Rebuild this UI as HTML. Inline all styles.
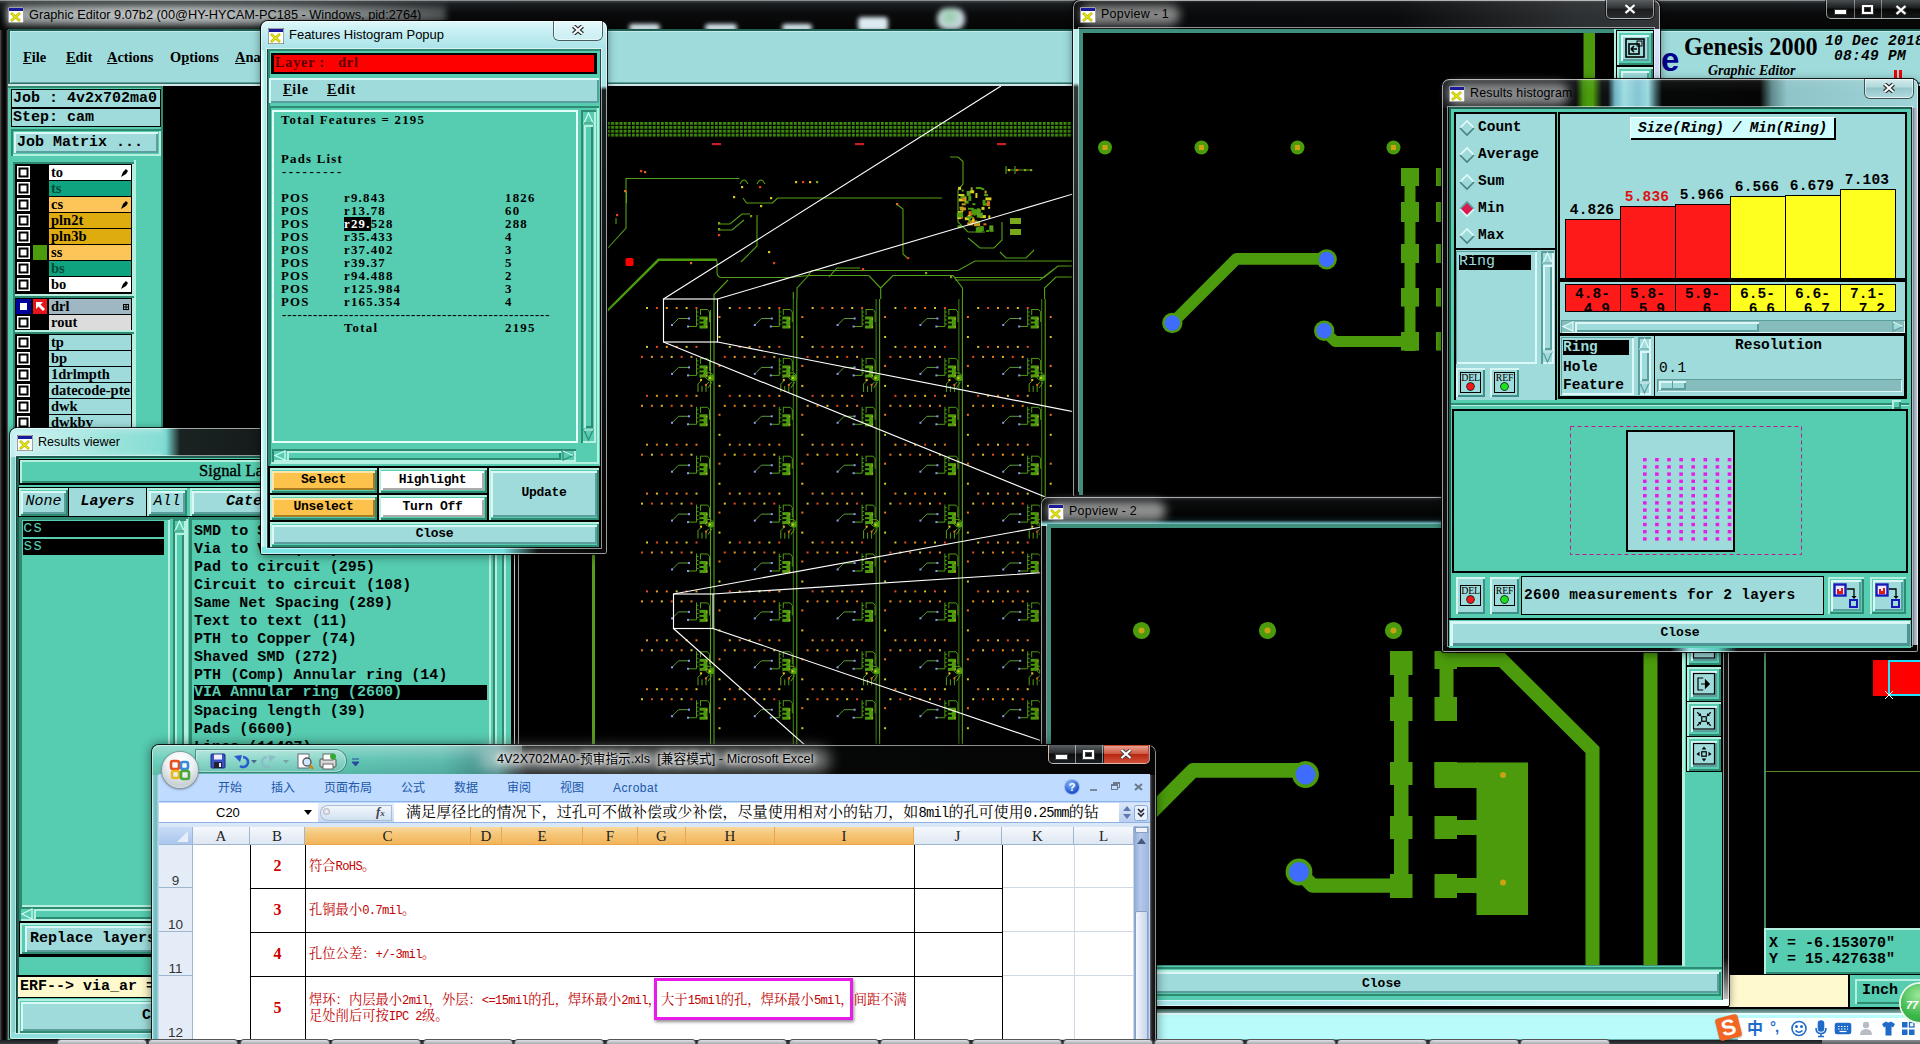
<!DOCTYPE html>
<html lang="zh"><head><meta charset="utf-8"><title>Graphic Editor</title>
<style>
*{box-sizing:border-box}
html,body{margin:0;padding:0}
body{width:1920px;height:1044px;overflow:hidden;background:#000;position:relative;font-family:"Liberation Mono",monospace;color:#000}
.a{position:absolute}
.t{background:#56ccb0}
.c{background:#9fdbdb}
.cb{font:bold 15px "Liberation Mono",monospace;white-space:pre}
.ts{font:bold 14.4px "Liberation Serif",serif;white-space:pre}
.ui{font:12px "Liberation Sans","Noto Sans CJK SC",sans-serif;white-space:pre}
.upt{box-shadow:inset 2px 2px 0 #b4efe0,inset -2px -2px 0 #2f8a72}
.dnt{box-shadow:inset 2px 2px 0 #2f8a72,inset -2px -2px 0 #b4efe0}
.upc{box-shadow:inset 2px 2px 0 #dcf7f7,inset -2px -2px 0 #5c9d9d}
.dnc{box-shadow:inset 2px 2px 0 #5c9d9d,inset -2px -2px 0 #dcf7f7}
.up1t{box-shadow:inset 1px 1px 0 #b4efe0,inset -1px -1px 0 #2f8a72}
.up1c{box-shadow:inset 1px 1px 0 #dcf7f7,inset -1px -1px 0 #5c9d9d}
.glow{text-shadow:0 0 6px #fff,0 0 6px #fff,0 0 9px #fff,0 0 12px #fff}
.win{position:absolute;border-radius:7px 7px 3px 3px}
.cap{position:absolute;top:0;height:19px;border:1px solid rgba(255,255,255,.55);border-top:none;border-radius:0 0 5px 5px;box-shadow:0 0 0 1px rgba(0,0,0,.6)}
.u{text-decoration:underline}
svg{position:absolute;overflow:visible}
</style></head><body>
<svg width="0" height="0" style="position:absolute"><defs>
<symbol id="xi" viewBox="0 0 16 16"><rect x="0" y="0" width="16" height="16" fill="#fff"/><rect x="0" y="0" width="16" height="16" fill="none" stroke="#444" stroke-width="1"/><rect x="1" y="1" width="14" height="3" fill="#1a1a9a"/><path d="M3 6 L12 14 M12 6 L3 14" stroke="#b8b800" stroke-width="2.6"/><path d="M3.5 6.5 L11.5 13.5 M11.5 6.5 L3.5 13.5" stroke="#e6e619" stroke-width="1.2"/></symbol>
<symbol id="cx" viewBox="0 0 12 10"><path d="M1.5 1 L10.5 9 M10.5 1 L1.5 9" stroke="#3a3a3a" stroke-width="3.8"/><path d="M1.5 1 L10.5 9 M10.5 1 L1.5 9" stroke="#fff" stroke-width="2.2"/></symbol>
<symbol id="cx2" viewBox="0 0 12 10"><path d="M1.5 1 L10.5 9 M10.5 1 L1.5 9" stroke="#2a2f33" stroke-width="4.4"/><path d="M1.5 1 L10.5 9 M10.5 1 L1.5 9" stroke="#fff" stroke-width="2"/></symbol>
</defs></svg>
<div class="a " style="left:0px;top:0px;width:1920px;height:30px;background:linear-gradient(#3a3f42 0,#1b1e20 3px,#0a0b0c 12px,#050505 29px);border-top:1px solid #8a9092"></div>
<div class="a" style="left:6px;top:3px;width:440px;height:24px;background:radial-gradient(ellipse at 35% 50%,rgba(255,255,255,.85) 0,rgba(235,245,245,.6) 45%,rgba(200,215,215,0) 100%);filter:blur(3px)"></div>
<div class="a" style="left:629px;top:24px;width:31px;height:7px;background:rgba(232,248,255,.95);filter:blur(2.2px);border-radius:4px"></div>
<div class="a" style="left:705px;top:24px;width:32px;height:7px;background:rgba(232,248,255,.95);filter:blur(2.2px);border-radius:4px"></div>
<div class="a" style="left:782px;top:24px;width:30px;height:7px;background:rgba(232,248,255,.95);filter:blur(2.2px);border-radius:4px"></div>
<div class="a" style="left:858px;top:17px;width:30px;height:14px;background:rgba(232,248,255,.95);filter:blur(2.2px);border-radius:4px"></div>
<div class="a" style="left:937px;top:8px;width:28px;height:22px;background:radial-gradient(circle at 45% 40%,rgba(150,215,170,.95),rgba(225,240,250,.9) 60%);filter:blur(2.5px);border-radius:10px"></div>
<svg class="a" style="left:8px;top:7px" width="16" height="16"><use href="#xi"/></svg>
<div class="a ui" style="left:29px;top:7px;font-size:12.75px;line-height:15px;color:#000" id="maintitle">Graphic Editor 9.07b2 (00@HY-HYCAM-PC185 - Windows, pid:2764)</div>
<div class="cap" style="left:1826px;width:98px;background:linear-gradient(#4a4f52,#1a1c1d 45%,#060606 50%,#15181a)"></div>
<div class="a" style="left:1854px;top:0;width:1px;height:18px;background:rgba(255,255,255,.4)"></div><div class="a" style="left:1881px;top:0;width:1px;height:18px;background:rgba(255,255,255,.4)"></div>
<div class="a" style="left:1835px;top:10px;width:11px;height:4px;background:#fff;box-shadow:0 0 0 1px #333"></div>
<div class="a" style="left:1862px;top:5px;width:11px;height:9px;border:2.5px solid #fff;box-shadow:0 0 0 1px #333,inset 0 0 0 1px #333"></div>
<svg class="a" style="left:1895px;top:5px" width="12" height="10"><use href="#cx"/></svg>
<div class="a " style="left:0px;top:30px;width:8px;height:1014px;background:linear-gradient(90deg,#555 0,#111 2px,#000 5px,#2a2a2a 7px,#777 8px)"></div>
<div class="a t" style="left:8px;top:29px;width:1912px;height:57px;"></div>
<div class="a " style="left:8px;top:29px;width:1912px;height:2px;background:#1e5e50"></div>
<div class="a " style="left:8px;top:29px;width:2px;height:1012px;background:#1e5e50"></div>
<div class="a c" style="left:10px;top:31px;width:1910px;height:52px;box-shadow:inset 1px 1px 0 #c4ecec,inset 0 -1px 0 #5c9d9d"></div>
<div class="a " style="left:8px;top:83px;width:1912px;height:1px;background:#2f6f62"></div>
<div class="a " style="left:8px;top:84px;width:1912px;height:2px;background:#cfe6e6"></div>
<div class="a ts" style="left:23px;top:47px;line-height:20px"><span class="u">F</span>ile</div>
<div class="a ts" style="left:66px;top:47px;line-height:20px"><span class="u">E</span>dit</div>
<div class="a ts" style="left:107px;top:47px;line-height:20px"><span class="u">A</span>ctions</div>
<div class="a ts" style="left:170px;top:47px;line-height:20px">O<span class="u">p</span>tions</div>
<div class="a ts" style="left:235px;top:47px;line-height:20px"><span class="u">A</span>na</div>
<div class="a t" style="left:8px;top:86px;width:155px;height:956px;"></div>
<div class="a " style="left:8px;top:86px;width:155px;height:2px;background:#2f8a72"></div>
<div class="a " style="left:161px;top:88px;width:2px;height:400px;background:#2f8a72"></div>
<div class="a " style="left:11px;top:89px;width:150px;height:19px;background:#000"></div>
<div class="a c cb" style="left:12px;top:90px;width:148px;height:17px;line-height:17px;padding-left:1px;font-size:15px">Job : 4v2x702ma0</div>
<div class="a " style="left:11px;top:108px;width:150px;height:19px;background:#000"></div>
<div class="a c cb" style="left:12px;top:109px;width:148px;height:17px;line-height:17px;padding-left:1px;font-size:15px">Step: cam</div>
<div class="a t dnt" style="left:11px;top:129px;width:150px;height:27px;"></div>
<div class="a c upc cb" style="left:14px;top:132px;width:144px;height:21px;line-height:21px;padding-left:3px;font-size:15px">Job Matrix ...</div>
<div class="a t dnt" style="left:13px;top:162px;width:121px;height:134px;"></div>
<div class="a " style="left:15px;top:164px;width:117px;height:130px;background:#000"></div>
<div class="a t dnt" style="left:13px;top:296px;width:121px;height:36px;"></div>
<div class="a " style="left:15px;top:298px;width:117px;height:32px;background:#000"></div>
<div class="a t dnt" style="left:13px;top:332px;width:121px;height:100px;"></div>
<div class="a " style="left:15px;top:334px;width:117px;height:98px;background:#000"></div>
<div class="a " style="left:134px;top:160px;width:2px;height:280px;background:#b4efe0"></div>
<div class="a " style="left:16px;top:165px;width:15px;height:15px;background:#000"></div>
<div class="a " style="left:17px;top:166px;width:13px;height:13px;background:#fff;box-shadow:inset 0 0 0 1.5px #fff,inset 0 0 0 3.5px #000"></div>
<div class="a " style="left:49px;top:165px;width:82px;height:15px;background:#fff;overflow:hidden;font:bold 14.5px 'Liberation Serif',serif;line-height:14px;padding-left:2px;color:#000;white-space:pre">to</div>
<svg class="a" style="left:120px;top:168px" width="9" height="10"><path d="M1 9 L3 4 L6 1 L8 3 L6 6 Z" fill="#000"/></svg>
<div class="a " style="left:16px;top:181px;width:15px;height:15px;background:#000"></div>
<div class="a " style="left:17px;top:182px;width:13px;height:13px;background:#fff;box-shadow:inset 0 0 0 1.5px #fff,inset 0 0 0 3.5px #000"></div>
<div class="a " style="left:49px;top:181px;width:82px;height:15px;background:#0fa37f;overflow:hidden;font:bold 14.5px 'Liberation Serif',serif;line-height:14px;padding-left:2px;color:#004d3a;white-space:pre">ts</div>
<div class="a " style="left:16px;top:197px;width:15px;height:15px;background:#000"></div>
<div class="a " style="left:17px;top:198px;width:13px;height:13px;background:#fff;box-shadow:inset 0 0 0 1.5px #fff,inset 0 0 0 3.5px #000"></div>
<div class="a " style="left:49px;top:197px;width:82px;height:15px;background:#fdc558;overflow:hidden;font:bold 14.5px 'Liberation Serif',serif;line-height:14px;padding-left:2px;color:#000;white-space:pre">cs</div>
<svg class="a" style="left:120px;top:200px" width="9" height="10"><path d="M1 9 L3 4 L6 1 L8 3 L6 6 Z" fill="#000"/></svg>
<div class="a " style="left:16px;top:213px;width:15px;height:15px;background:#000"></div>
<div class="a " style="left:17px;top:214px;width:13px;height:13px;background:#fff;box-shadow:inset 0 0 0 1.5px #fff,inset 0 0 0 3.5px #000"></div>
<div class="a " style="left:49px;top:213px;width:82px;height:15px;background:#dfac10;overflow:hidden;font:bold 14.5px 'Liberation Serif',serif;line-height:14px;padding-left:2px;color:#000;white-space:pre">pln2t</div>
<div class="a " style="left:16px;top:229px;width:15px;height:15px;background:#000"></div>
<div class="a " style="left:17px;top:230px;width:13px;height:13px;background:#fff;box-shadow:inset 0 0 0 1.5px #fff,inset 0 0 0 3.5px #000"></div>
<div class="a " style="left:49px;top:229px;width:82px;height:15px;background:#dfac10;overflow:hidden;font:bold 14.5px 'Liberation Serif',serif;line-height:14px;padding-left:2px;color:#000;white-space:pre">pln3b</div>
<div class="a " style="left:16px;top:245px;width:15px;height:15px;background:#000"></div>
<div class="a " style="left:17px;top:246px;width:13px;height:13px;background:#fff;box-shadow:inset 0 0 0 1.5px #fff,inset 0 0 0 3.5px #000"></div>
<div class="a " style="left:49px;top:245px;width:82px;height:15px;background:#fdc558;overflow:hidden;font:bold 14.5px 'Liberation Serif',serif;line-height:14px;padding-left:2px;color:#000;white-space:pre">ss</div>
<div class="a " style="left:16px;top:261px;width:15px;height:15px;background:#000"></div>
<div class="a " style="left:17px;top:262px;width:13px;height:13px;background:#fff;box-shadow:inset 0 0 0 1.5px #fff,inset 0 0 0 3.5px #000"></div>
<div class="a " style="left:49px;top:261px;width:82px;height:15px;background:#0fa37f;overflow:hidden;font:bold 14.5px 'Liberation Serif',serif;line-height:14px;padding-left:2px;color:#004d3a;white-space:pre">bs</div>
<div class="a " style="left:16px;top:277px;width:15px;height:15px;background:#000"></div>
<div class="a " style="left:17px;top:278px;width:13px;height:13px;background:#fff;box-shadow:inset 0 0 0 1.5px #fff,inset 0 0 0 3.5px #000"></div>
<div class="a " style="left:49px;top:277px;width:82px;height:15px;background:#fff;overflow:hidden;font:bold 14.5px 'Liberation Serif',serif;line-height:14px;padding-left:2px;color:#000;white-space:pre">bo</div>
<svg class="a" style="left:120px;top:280px" width="9" height="10"><path d="M1 9 L3 4 L6 1 L8 3 L6 6 Z" fill="#000"/></svg>
<div class="a " style="left:16px;top:299px;width:15px;height:15px;background:#00009c"></div>
<div class="a " style="left:17px;top:300px;width:13px;height:13px;background:#fff;border:3px solid #00009c"></div>
<div class="a " style="left:49px;top:299px;width:82px;height:15px;background:#9fb7c3;overflow:hidden;font:bold 14.5px 'Liberation Serif',serif;line-height:14px;padding-left:2px;color:#000;white-space:pre">drl</div>
<svg class="a" style="left:123px;top:304px" width="6" height="6"><rect x=".5" y=".5" width="5" height="5" fill="none" stroke="#000"/><path d="M0 3H6M3 0V6" stroke="#000"/></svg>
<div class="a " style="left:16px;top:315px;width:15px;height:15px;background:#000"></div>
<div class="a " style="left:17px;top:316px;width:13px;height:13px;background:#fff;box-shadow:inset 0 0 0 1.5px #fff,inset 0 0 0 3.5px #000"></div>
<div class="a " style="left:49px;top:315px;width:82px;height:15px;background:#dcdcdc;overflow:hidden;font:bold 14.5px 'Liberation Serif',serif;line-height:14px;padding-left:2px;color:#000;white-space:pre">rout</div>
<div class="a " style="left:16px;top:335px;width:15px;height:15px;background:#000"></div>
<div class="a " style="left:17px;top:336px;width:13px;height:13px;background:#fff;box-shadow:inset 0 0 0 1.5px #fff,inset 0 0 0 3.5px #000"></div>
<div class="a " style="left:49px;top:335px;width:82px;height:15px;background:#9fdbdb;overflow:hidden;font:bold 14.5px 'Liberation Serif',serif;line-height:14px;padding-left:2px;color:#000;white-space:pre">tp</div>
<div class="a " style="left:16px;top:351px;width:15px;height:15px;background:#000"></div>
<div class="a " style="left:17px;top:352px;width:13px;height:13px;background:#fff;box-shadow:inset 0 0 0 1.5px #fff,inset 0 0 0 3.5px #000"></div>
<div class="a " style="left:49px;top:351px;width:82px;height:15px;background:#9fdbdb;overflow:hidden;font:bold 14.5px 'Liberation Serif',serif;line-height:14px;padding-left:2px;color:#000;white-space:pre">bp</div>
<div class="a " style="left:16px;top:367px;width:15px;height:15px;background:#000"></div>
<div class="a " style="left:17px;top:368px;width:13px;height:13px;background:#fff;box-shadow:inset 0 0 0 1.5px #fff,inset 0 0 0 3.5px #000"></div>
<div class="a " style="left:49px;top:367px;width:82px;height:15px;background:#9fdbdb;overflow:hidden;font:bold 14.5px 'Liberation Serif',serif;line-height:14px;padding-left:2px;color:#000;white-space:pre">1drlmpth</div>
<div class="a " style="left:16px;top:383px;width:15px;height:15px;background:#000"></div>
<div class="a " style="left:17px;top:384px;width:13px;height:13px;background:#fff;box-shadow:inset 0 0 0 1.5px #fff,inset 0 0 0 3.5px #000"></div>
<div class="a " style="left:49px;top:383px;width:82px;height:15px;background:#9fdbdb;overflow:hidden;font:bold 14.5px 'Liberation Serif',serif;line-height:14px;padding-left:2px;color:#000;white-space:pre">datecode-pte</div>
<div class="a " style="left:16px;top:399px;width:15px;height:15px;background:#000"></div>
<div class="a " style="left:17px;top:400px;width:13px;height:13px;background:#fff;box-shadow:inset 0 0 0 1.5px #fff,inset 0 0 0 3.5px #000"></div>
<div class="a " style="left:49px;top:399px;width:82px;height:15px;background:#9fdbdb;overflow:hidden;font:bold 14.5px 'Liberation Serif',serif;line-height:14px;padding-left:2px;color:#000;white-space:pre">dwk</div>
<div class="a " style="left:16px;top:415px;width:15px;height:15px;background:#000"></div>
<div class="a " style="left:17px;top:416px;width:13px;height:13px;background:#fff;box-shadow:inset 0 0 0 1.5px #fff,inset 0 0 0 3.5px #000"></div>
<div class="a " style="left:49px;top:415px;width:82px;height:15px;background:#9fdbdb;overflow:hidden;font:bold 14.5px 'Liberation Serif',serif;line-height:14px;padding-left:2px;color:#000;white-space:pre">dwkbv</div>
<div class="a " style="left:33px;top:245px;width:14px;height:15px;background:#4b9b0c"></div>
<div class="a " style="left:33px;top:299px;width:14px;height:15px;background:#e8141c"></div>
<svg class="a" style="left:33px;top:299px" width="14" height="15"><path d="M3 3 H10 L7.5 5.5 L12 10 L10 12 L5.5 7.5 L3 10 Z" fill="#fff"/></svg>
<div class="a" style="left:1661px;top:46px;font:bold 33px 'Liberation Sans',sans-serif;color:#00008b;line-height:28px">e</div>
<div class="a" style="left:1684px;top:33px;font:bold 24.2px 'Liberation Serif',serif;line-height:28px;white-space:pre">Genesis 2000</div>
<div class="a" style="left:1708px;top:63px;font:italic bold 14px 'Liberation Serif',serif;line-height:16px;white-space:pre">Graphic Editor</div>
<div class="a" style="left:1825px;top:34px;font:italic bold 14.5px 'Liberation Mono',monospace;line-height:15px;white-space:pre;letter-spacing:.3px">10 Dec 2018<br> 08:49 PM</div>
<div class="a " style="left:1894px;top:70px;width:3px;height:10px;background:#e00"></div>
<div class="a " style="left:1899px;top:70px;width:3px;height:10px;background:#e00"></div>
<div class="a " style="left:1764px;top:652px;width:2px;height:280px;background:#4a8a5a"></div>
<div class="a " style="left:1766px;top:771px;width:154px;height:1px;background:#5a8a2a"></div>
<div class="a " style="left:1873px;top:660px;width:16px;height:36px;background:#fe0000"></div>
<div class="a " style="left:1888px;top:660px;width:34px;height:36px;background:#fe0000;border:2px solid #1fe5ff"></div>
<svg class="a" style="left:1885px;top:691px" width="8" height="8"><path d="M0 0L8 8M8 0L0 8" stroke="#fff" stroke-width="1"/></svg>
<div class="a t upt cb" style="left:1764px;top:928px;width:160px;height:46px;line-height:15.5px;padding:8px 0 0 5px;font-size:15px">X = -6.153070"<br>Y = 15.427638"</div>
<div class="a " style="left:1729px;top:975px;width:119px;height:32px;background:#fffacd"></div>
<div class="a t" style="left:1848px;top:975px;width:72px;height:33px;border-left:2px solid #000"></div>
<div class="a t upt cb" style="left:1855px;top:979px;width:70px;height:25px;line-height:24px;padding-left:7px">Inch</div>
<div class="a " style="left:1156px;top:1007px;width:764px;height:2px;background:#000"></div>
<div class="a " style="left:1156px;top:1009px;width:764px;height:4px;background:linear-gradient(#3a6a60,#8fb0b0)"></div>
<div class="a " style="left:1156px;top:1013px;width:764px;height:27px;background:#b9fbfb;border-top:2px solid #e6ffff;border-bottom:1px solid #6aa"></div>
<svg class="a" style="left:163px;top:86px" width="910" height="660" viewBox="163 86 910 660"><defs><clipPath id="pc"><rect x="163" y="86" width="910" height="660"/></clipPath><pattern id="bd" x="607" y="122" width="4.15" height="3.9" patternUnits="userSpaceOnUse"><rect x="0" y="0" width="3" height="2.8" fill="#408a0e"/></pattern><g id="cmp" fill="none" stroke="#4e9a12" stroke-width="1"><path d="M-42 7 L-35.500 .5 H-25.500" stroke="#5a9a3a"/><path d="M-26 8.500 H-17.500 V-9"/><path d="M-17.500 -6h2M-17.500 -2h2M-17.500 2h2M-17.500 6h2"/><path d="M-14 -8.500 H-6.500 L-4.500 -6 V4"/><path d="M-13.500 -8.500 V-3"/><rect x="-14.500" y="-1.500" width="8" height="12" fill="#4b9b0c" stroke="none"/><rect x="-14.500" y="1.500" width="4" height="2" fill="#000" stroke="none"/><rect x="-14.500" y="5.500" width="4" height="2" fill="#000" stroke="none"/><rect x="-43" y="6" width="2" height="2" fill="#8a9ae8" stroke="none"/><rect x="-26" y="-.5" width="2" height="2" fill="#8a9ae8" stroke="none"/><rect x="-27" y="7.500" width="2" height="2" fill="#8a9ae8" stroke="none"/><rect x="-8" y="0" width="1.500" height="1.500" fill="#d8a020" stroke="none"/><rect x="-8" y="8" width="1.500" height="1.500" fill="#d8a020" stroke="none"/></g><g id="tng" fill="none" stroke="#5aa01a" stroke-width="1"><path d="M-14 -6 l5 -5 h6 l3 3 M-16 8 v-8 l4 -4 M-12 8 v-6 M-8 8 v-7 l3 -3 M-10 -8 l4 4 l5 -1 M-2 -2 l-4 6"/><circle cx="-3" cy="-6" r="3.200" fill="#4b9b0c" stroke="none"/><rect x="-14" y="-5" width="2" height="2" fill="#e8c020" stroke="none"/><rect x="-9" y="0" width="2" height="2" fill="#e86a1c" stroke="none"/><rect x="-5" y="-7" width="2" height="2" fill="#d8d020" stroke="none"/></g></defs><g clip-path="url(#pc)"><rect x="607" y="122" width="470" height="15.2" fill="url(#bd)"/><rect x="712" y="143" width="9" height="2.2" fill="#c8202a"/><rect x="855" y="143" width="9" height="2.2" fill="#c8202a"/><rect x="997" y="143" width="9" height="2.2" fill="#c8202a"/><rect x="625.500" y="258" width="8" height="8" rx="1.500" fill="#fe0000"/><path d="M739.500 178.500 H626 V228 L607 249" fill="none" stroke="#55a018" stroke-width="1.1"/><path d="M743 198 L746.500 203 H772.500 L777.500 198 H942" fill="none" stroke="#55a018" stroke-width="1.1"/><path d="M896.500 204 L903 209 V254 L908 258.500" fill="none" stroke="#55a018" stroke-width="1.1"/><path d="M950 157 H958 L963 161.500 V184 L958 190 V222 L968 232 H985" fill="none" stroke="#55a018" stroke-width="1.1"/><path d="M740 184 q4 -8 8 0 M757 184 q4 -8 8 0" fill="none" stroke="#55a018" stroke-width="1.1"/><path d="M718 224 H730 L742 214 H750 M718 230 H732 L744 220 M757 215 V246 L741 262" fill="none" stroke="#55a018" stroke-width="1.1"/><path d="M626.500 191 v12 M616 218 v6" fill="none" stroke="#55a018" stroke-width="1.1"/><path d="M722 277.500 H790 L808.500 275.500 H868.700 M808 275.500 L812 270.500 H958 L975 261 H1073 M829 277 L837 268 H860" fill="none" stroke="#55a018" stroke-width="1.1"/><path d="M955 277.500 H1044 L1058 266 H1073 M955 280 H1040 L1054 269" fill="none" stroke="#55a018" stroke-width="1.1"/><path d="M717 260.500 V272 Q717 277.500 722 277.500" fill="none" stroke="#55a018" stroke-width="1.1"/><path d="M714 299 V294.500 L728 280 M797 299 V288 L808.500 275.500 M880.700 299 V288 L868.700 275.500 M880.700 288 L893 275.500 H953 L962.500 288 V299 M1044.600 299 V288 L1056 277 H1073" fill="none" stroke="#55a018" stroke-width="1.1"/><path d="M793.300 299 V292 M710.500 310 V745" fill="none" stroke="#55a018" stroke-width="1.1"/><path d="M1006 166 v8 M1015 166 v8 M1006 170 h24" fill="none" stroke="#55a018" stroke-width="1.1"/><path d="M968 238 l12 10 h14 l8 -8 v-18 M1000 252 l6 6 h20 l8 -8" fill="none" stroke="#55a018" stroke-width="1.1"/><path d="M603 315 L658.500 259.800 H717" fill="none" stroke="#4b9b0c" stroke-width="2.4"/><rect x="967.0" y="191.2" width="2" height="2" fill="#e86a1c"/><rect x="959.2" y="212.0" width="3" height="2" fill="#4b9b0c"/><rect x="970.7" y="187.4" width="2" height="5" fill="#c8a020"/><rect x="958.0" y="211.1" width="3" height="5" fill="#d8d020"/><rect x="975.8" y="187.0" width="6" height="2" fill="#4b9b0c"/><rect x="957.6" y="225.2" width="4" height="3" fill="#4b9b0c"/><rect x="974.4" y="211.4" width="3" height="2" fill="#e86a1c"/><rect x="975.4" y="193.0" width="2" height="5" fill="#d8d020"/><rect x="958.1" y="186.9" width="3" height="3" fill="#d8d020"/><rect x="974.1" y="221.3" width="6" height="5" fill="#c8a020"/><rect x="968.3" y="195.9" width="3" height="5" fill="#4b9b0c"/><rect x="958.8" y="198.4" width="6" height="3" fill="#d8d020"/><rect x="971.3" y="213.2" width="2" height="2" fill="#e86a1c"/><rect x="970.2" y="220.3" width="3" height="3" fill="#c8a020"/><rect x="957.3" y="216.1" width="4" height="3" fill="#d8d020"/><rect x="967.9" y="207.8" width="6" height="2" fill="#4b9b0c"/><rect x="988.1" y="206.8" width="2" height="2" fill="#d8d020"/><rect x="979.9" y="215.1" width="6" height="3" fill="#d8d020"/><rect x="969.1" y="216.1" width="2" height="3" fill="#5aa01a"/><rect x="961.7" y="189.6" width="2" height="2" fill="#5aa01a"/><rect x="960.4" y="195.9" width="6" height="3" fill="#4b9b0c"/><rect x="961.7" y="203.3" width="4" height="2" fill="#c8a020"/><rect x="985.4" y="197.4" width="6" height="3" fill="#d8d020"/><rect x="986.1" y="230.0" width="3" height="2" fill="#4b9b0c"/><rect x="961.1" y="215.6" width="2" height="3" fill="#e86a1c"/><rect x="962.2" y="197.5" width="3" height="3" fill="#e86a1c"/><rect x="968.6" y="211.2" width="3" height="5" fill="#e86a1c"/><rect x="988.3" y="215.4" width="2" height="3" fill="#d8d020"/><rect x="983.1" y="202.8" width="6" height="3" fill="#4b9b0c"/><rect x="972.4" y="203.2" width="3" height="2" fill="#4b9b0c"/><rect x="971.0" y="189.3" width="2" height="2" fill="#4b9b0c"/><rect x="975.3" y="209.8" width="4" height="5" fill="#4b9b0c"/><rect x="958.4" y="194.0" width="6" height="2" fill="#d8d020"/><rect x="964.6" y="200.7" width="4" height="3" fill="#4b9b0c"/><rect x="959.9" y="207.4" width="6" height="3" fill="#c8a020"/><rect x="966.6" y="190.9" width="4" height="5" fill="#5aa01a"/><rect x="972.3" y="217.2" width="2" height="2" fill="#e86a1c"/><rect x="968.3" y="217.1" width="2" height="5" fill="#5aa01a"/><rect x="989.3" y="225.4" width="4" height="5" fill="#5aa01a"/><rect x="986.9" y="201.1" width="3" height="5" fill="#e86a1c"/><rect x="982.5" y="199.8" width="3" height="5" fill="#4b9b0c"/><rect x="983.4" y="223.3" width="3" height="2" fill="#e86a1c"/><rect x="972.8" y="219.1" width="2" height="3" fill="#c8a020"/><rect x="964.8" y="217.2" width="4" height="3" fill="#d8d020"/><rect x="989.6" y="229.8" width="4" height="2" fill="#4b9b0c"/><rect x="959.5" y="206.6" width="4" height="2" fill="#c8a020"/><rect x="977.2" y="227.2" width="2" height="3" fill="#d8d020"/><rect x="967.7" y="214.9" width="2" height="3" fill="#d8d020"/><rect x="981.5" y="206.9" width="3" height="3" fill="#d8d020"/><rect x="967.3" y="222.4" width="6" height="3" fill="#c8a020"/><rect x="981.3" y="188.1" width="3" height="2" fill="#4b9b0c"/><rect x="956.9" y="212.4" width="6" height="5" fill="#4b9b0c"/><rect x="976.8" y="212.6" width="6" height="5" fill="#5aa01a"/><rect x="961.3" y="210.3" width="2" height="2" fill="#d8d020"/><rect x="978.1" y="209.3" width="3" height="3" fill="#4b9b0c"/><rect x="984.1" y="194.1" width="4" height="2" fill="#5aa01a"/><rect x="973.0" y="220.7" width="4" height="3" fill="#e86a1c"/><rect x="970.2" y="190.3" width="4" height="3" fill="#d8d020"/><rect x="975.8" y="227.4" width="6" height="5" fill="#4b9b0c"/><rect x="974.1" y="209.1" width="2" height="3" fill="#4b9b0c"/><rect x="976.7" y="221.2" width="3" height="2" fill="#4b9b0c"/><rect x="972.1" y="218.8" width="2" height="3" fill="#d8d020"/><rect x="973.6" y="210.7" width="2" height="5" fill="#4b9b0c"/><rect x="964.4" y="197.3" width="2" height="5" fill="#c8a020"/><rect x="975.1" y="220.5" width="2" height="3" fill="#5aa01a"/><rect x="976.8" y="208.3" width="3" height="5" fill="#5aa01a"/><rect x="971.4" y="209.6" width="6" height="5" fill="#4b9b0c"/><rect x="979.8" y="226.1" width="4" height="5" fill="#4b9b0c"/><rect x="984.6" y="190.6" width="2" height="3" fill="#c8a020"/><rect x="966.7" y="216.2" width="6" height="2" fill="#4b9b0c"/><rect x="1010" y="218" width="11" height="6" fill="#7aa81a"/><rect x="1010" y="229" width="11" height="6" fill="#7aa81a"/><rect x="640" y="170" width="2.2" height="2.2" fill="#e8441c"/><rect x="644" y="171" width="2.2" height="2.2" fill="#e86a1c"/><rect x="741" y="186" width="2.2" height="2.2" fill="#d8c828"/><rect x="759" y="186" width="2.2" height="2.2" fill="#e8441c"/><rect x="795" y="181" width="2.2" height="2.2" fill="#d8c828"/><rect x="802" y="181" width="2.2" height="2.2" fill="#e8441c"/><rect x="809" y="181" width="2.2" height="2.2" fill="#d8c828"/><rect x="816" y="181" width="2.2" height="2.2" fill="#7aa81a"/><rect x="1008" y="169" width="2.2" height="2.2" fill="#d8c828"/><rect x="1016" y="169" width="2.2" height="2.2" fill="#e86a1c"/><rect x="1024" y="169" width="2.2" height="2.2" fill="#7aa81a"/><rect x="1030" y="169" width="2.2" height="2.2" fill="#7aa81a"/><rect x="733" y="196" width="2.2" height="2.2" fill="#d8c828"/><rect x="770" y="197" width="2.2" height="2.2" fill="#d8c828"/><rect x="760" y="205" width="2.2" height="2.2" fill="#d8c828"/><rect x="718" y="222" width="2.2" height="2.2" fill="#7aa81a"/><rect x="718" y="228" width="2.2" height="2.2" fill="#7aa81a"/><rect x="718" y="234" width="2.2" height="2.2" fill="#e8441c"/><rect x="750" y="215" width="2.2" height="2.2" fill="#7aa81a"/><rect x="768" y="251" width="2.2" height="2.2" fill="#d8c828"/><rect x="773" y="262" width="2.2" height="2.2" fill="#e8441c"/><rect x="616" y="214" width="2.2" height="2.2" fill="#e8441c"/><rect x="624" y="190" width="2.2" height="2.2" fill="#e86a1c"/><rect x="907" y="257" width="2.2" height="2.2" fill="#e8441c"/><rect x="896" y="203" width="2.2" height="2.2" fill="#e86a1c"/><rect x="862" y="268" width="2.2" height="2.2" fill="#e8441c"/><rect x="925" y="272" width="2.2" height="2.2" fill="#7aa81a"/><rect x="950" y="276" width="2.2" height="2.2" fill="#7aa81a"/><rect x="690" y="262" width="2.2" height="2.2" fill="#e86a1c"/><path d="M714.0 299 V745" stroke="#55a018" stroke-width="1.1"/><use href="#cmp" x="714.0" y="318.0"/><rect x="646.0" y="307.0" width="2" height="2" fill="#d8c828"/><rect x="655.9" y="307.0" width="2" height="2" fill="#e84a1c"/><rect x="665.8" y="307.0" width="2" height="2" fill="#e8a01c"/><rect x="675.7" y="307.0" width="2" height="2" fill="#e8761c"/><rect x="685.6" y="307.0" width="2" height="2" fill="#d8c828"/><rect x="695.5" y="307.0" width="2" height="2" fill="#e84a1c"/><rect x="718.5" y="316.0" width="2" height="2" fill="#e8761c"/><rect x="718.5" y="336.0" width="2" height="2" fill="#d8c828"/><use href="#cmp" x="714.0" y="366.9"/><rect x="646.0" y="345.9" width="2" height="2" fill="#d8c828"/><rect x="641.0" y="355.9" width="2" height="2" fill="#e84a1c"/><rect x="655.9" y="345.9" width="2" height="2" fill="#e84a1c"/><rect x="650.9" y="355.9" width="2" height="2" fill="#e8a01c"/><rect x="665.8" y="345.9" width="2" height="2" fill="#e8a01c"/><rect x="660.8" y="355.9" width="2" height="2" fill="#e8761c"/><rect x="675.7" y="345.9" width="2" height="2" fill="#e8761c"/><rect x="670.7" y="355.9" width="2" height="2" fill="#d8c828"/><rect x="685.6" y="345.9" width="2" height="2" fill="#d8c828"/><rect x="680.6" y="355.9" width="2" height="2" fill="#e84a1c"/><rect x="695.5" y="345.9" width="2" height="2" fill="#e84a1c"/><rect x="690.5" y="355.9" width="2" height="2" fill="#e8a01c"/><rect x="718.5" y="364.9" width="2" height="2" fill="#e8761c"/><rect x="718.5" y="384.9" width="2" height="2" fill="#d8c828"/><use href="#tng" x="714.0" y="383.9"/><use href="#cmp" x="714.0" y="415.8"/><rect x="646.0" y="394.8" width="2" height="2" fill="#e84a1c"/><rect x="641.0" y="404.8" width="2" height="2" fill="#e8a01c"/><rect x="655.9" y="394.8" width="2" height="2" fill="#e8a01c"/><rect x="650.9" y="404.8" width="2" height="2" fill="#e8761c"/><rect x="665.8" y="394.8" width="2" height="2" fill="#e8761c"/><rect x="660.8" y="404.8" width="2" height="2" fill="#d8c828"/><rect x="675.7" y="394.8" width="2" height="2" fill="#d8c828"/><rect x="670.7" y="404.8" width="2" height="2" fill="#e84a1c"/><rect x="685.6" y="394.8" width="2" height="2" fill="#e84a1c"/><rect x="680.6" y="404.8" width="2" height="2" fill="#e8a01c"/><rect x="695.5" y="394.8" width="2" height="2" fill="#e8a01c"/><rect x="690.5" y="404.8" width="2" height="2" fill="#e8761c"/><rect x="718.5" y="413.8" width="2" height="2" fill="#e8761c"/><rect x="718.5" y="433.8" width="2" height="2" fill="#d8c828"/><use href="#cmp" x="714.0" y="464.7"/><rect x="646.0" y="443.7" width="2" height="2" fill="#e8a01c"/><rect x="641.0" y="453.7" width="2" height="2" fill="#e8761c"/><rect x="655.9" y="443.7" width="2" height="2" fill="#e8761c"/><rect x="650.9" y="453.7" width="2" height="2" fill="#d8c828"/><rect x="665.8" y="443.7" width="2" height="2" fill="#d8c828"/><rect x="660.8" y="453.7" width="2" height="2" fill="#e84a1c"/><rect x="675.7" y="443.7" width="2" height="2" fill="#e84a1c"/><rect x="670.7" y="453.7" width="2" height="2" fill="#e8a01c"/><rect x="685.6" y="443.7" width="2" height="2" fill="#e8a01c"/><rect x="680.6" y="453.7" width="2" height="2" fill="#e8761c"/><rect x="695.5" y="443.7" width="2" height="2" fill="#e8761c"/><rect x="690.5" y="453.7" width="2" height="2" fill="#d8c828"/><rect x="718.5" y="462.7" width="2" height="2" fill="#e8761c"/><rect x="718.5" y="482.7" width="2" height="2" fill="#d8c828"/><use href="#cmp" x="714.0" y="513.6"/><rect x="646.0" y="492.6" width="2" height="2" fill="#e8761c"/><rect x="641.0" y="502.6" width="2" height="2" fill="#d8c828"/><rect x="655.9" y="492.6" width="2" height="2" fill="#d8c828"/><rect x="650.9" y="502.6" width="2" height="2" fill="#e84a1c"/><rect x="665.8" y="492.6" width="2" height="2" fill="#e84a1c"/><rect x="660.8" y="502.6" width="2" height="2" fill="#e8a01c"/><rect x="675.7" y="492.6" width="2" height="2" fill="#e8a01c"/><rect x="670.7" y="502.6" width="2" height="2" fill="#e8761c"/><rect x="685.6" y="492.6" width="2" height="2" fill="#e8761c"/><rect x="680.6" y="502.6" width="2" height="2" fill="#d8c828"/><rect x="695.5" y="492.6" width="2" height="2" fill="#d8c828"/><rect x="690.5" y="502.6" width="2" height="2" fill="#e84a1c"/><rect x="718.5" y="511.6" width="2" height="2" fill="#e8761c"/><rect x="718.5" y="531.6" width="2" height="2" fill="#d8c828"/><use href="#tng" x="714.0" y="530.6"/><use href="#cmp" x="714.0" y="562.5"/><rect x="646.0" y="541.5" width="2" height="2" fill="#d8c828"/><rect x="641.0" y="551.5" width="2" height="2" fill="#e84a1c"/><rect x="655.9" y="541.5" width="2" height="2" fill="#e84a1c"/><rect x="650.9" y="551.5" width="2" height="2" fill="#e8a01c"/><rect x="665.8" y="541.5" width="2" height="2" fill="#e8a01c"/><rect x="660.8" y="551.5" width="2" height="2" fill="#e8761c"/><rect x="675.7" y="541.5" width="2" height="2" fill="#e8761c"/><rect x="670.7" y="551.5" width="2" height="2" fill="#d8c828"/><rect x="685.6" y="541.5" width="2" height="2" fill="#d8c828"/><rect x="680.6" y="551.5" width="2" height="2" fill="#e84a1c"/><rect x="695.5" y="541.5" width="2" height="2" fill="#e84a1c"/><rect x="690.5" y="551.5" width="2" height="2" fill="#e8a01c"/><rect x="718.5" y="560.5" width="2" height="2" fill="#e8761c"/><rect x="718.5" y="580.5" width="2" height="2" fill="#d8c828"/><use href="#cmp" x="714.0" y="611.4"/><rect x="646.0" y="590.4" width="2" height="2" fill="#e84a1c"/><rect x="641.0" y="600.4" width="2" height="2" fill="#e8a01c"/><rect x="655.9" y="590.4" width="2" height="2" fill="#e8a01c"/><rect x="650.9" y="600.4" width="2" height="2" fill="#e8761c"/><rect x="665.8" y="590.4" width="2" height="2" fill="#e8761c"/><rect x="660.8" y="600.4" width="2" height="2" fill="#d8c828"/><rect x="675.7" y="590.4" width="2" height="2" fill="#d8c828"/><rect x="670.7" y="600.4" width="2" height="2" fill="#e84a1c"/><rect x="685.6" y="590.4" width="2" height="2" fill="#e84a1c"/><rect x="680.6" y="600.4" width="2" height="2" fill="#e8a01c"/><rect x="695.5" y="590.4" width="2" height="2" fill="#e8a01c"/><rect x="690.5" y="600.4" width="2" height="2" fill="#e8761c"/><rect x="718.5" y="609.4" width="2" height="2" fill="#e8761c"/><rect x="718.5" y="629.4" width="2" height="2" fill="#d8c828"/><use href="#cmp" x="714.0" y="660.3"/><rect x="646.0" y="639.3" width="2" height="2" fill="#e8a01c"/><rect x="641.0" y="649.3" width="2" height="2" fill="#e8761c"/><rect x="655.9" y="639.3" width="2" height="2" fill="#e8761c"/><rect x="650.9" y="649.3" width="2" height="2" fill="#d8c828"/><rect x="665.8" y="639.3" width="2" height="2" fill="#d8c828"/><rect x="660.8" y="649.3" width="2" height="2" fill="#e84a1c"/><rect x="675.7" y="639.3" width="2" height="2" fill="#e84a1c"/><rect x="670.7" y="649.3" width="2" height="2" fill="#e8a01c"/><rect x="685.6" y="639.3" width="2" height="2" fill="#e8a01c"/><rect x="680.6" y="649.3" width="2" height="2" fill="#e8761c"/><rect x="695.5" y="639.3" width="2" height="2" fill="#e8761c"/><rect x="690.5" y="649.3" width="2" height="2" fill="#d8c828"/><rect x="718.5" y="658.3" width="2" height="2" fill="#e8761c"/><rect x="718.5" y="678.3" width="2" height="2" fill="#d8c828"/><use href="#tng" x="714.0" y="677.3"/><use href="#cmp" x="714.0" y="709.2"/><rect x="646.0" y="688.2" width="2" height="2" fill="#e8761c"/><rect x="641.0" y="698.2" width="2" height="2" fill="#d8c828"/><rect x="655.9" y="688.2" width="2" height="2" fill="#d8c828"/><rect x="650.9" y="698.2" width="2" height="2" fill="#e84a1c"/><rect x="665.8" y="688.2" width="2" height="2" fill="#e84a1c"/><rect x="660.8" y="698.2" width="2" height="2" fill="#e8a01c"/><rect x="675.7" y="688.2" width="2" height="2" fill="#e8a01c"/><rect x="670.7" y="698.2" width="2" height="2" fill="#e8761c"/><rect x="685.6" y="688.2" width="2" height="2" fill="#e8761c"/><rect x="680.6" y="698.2" width="2" height="2" fill="#d8c828"/><rect x="695.5" y="688.2" width="2" height="2" fill="#d8c828"/><rect x="690.5" y="698.2" width="2" height="2" fill="#e84a1c"/><rect x="718.5" y="707.2" width="2" height="2" fill="#e8761c"/><rect x="718.5" y="727.2" width="2" height="2" fill="#d8c828"/><path d="M796.8 299 V745" stroke="#55a018" stroke-width="1.1"/><path d="M793.3 299 V745" stroke="#55a018" stroke-width="1" opacity=".8"/><use href="#cmp" x="796.8" y="318.0"/><rect x="728.8" y="307.0" width="2" height="2" fill="#d8c828"/><rect x="738.7" y="307.0" width="2" height="2" fill="#e84a1c"/><rect x="748.6" y="307.0" width="2" height="2" fill="#e8a01c"/><rect x="758.5" y="307.0" width="2" height="2" fill="#e8761c"/><rect x="768.4" y="307.0" width="2" height="2" fill="#d8c828"/><rect x="778.3" y="307.0" width="2" height="2" fill="#e84a1c"/><rect x="801.3" y="316.0" width="2" height="2" fill="#e8761c"/><rect x="801.3" y="336.0" width="2" height="2" fill="#d8c828"/><use href="#cmp" x="796.8" y="366.9"/><rect x="728.8" y="345.9" width="2" height="2" fill="#d8c828"/><rect x="723.8" y="355.9" width="2" height="2" fill="#e84a1c"/><rect x="738.7" y="345.9" width="2" height="2" fill="#e84a1c"/><rect x="733.7" y="355.9" width="2" height="2" fill="#e8a01c"/><rect x="748.6" y="345.9" width="2" height="2" fill="#e8a01c"/><rect x="743.6" y="355.9" width="2" height="2" fill="#e8761c"/><rect x="758.5" y="345.9" width="2" height="2" fill="#e8761c"/><rect x="753.5" y="355.9" width="2" height="2" fill="#d8c828"/><rect x="768.4" y="345.9" width="2" height="2" fill="#d8c828"/><rect x="763.4" y="355.9" width="2" height="2" fill="#e84a1c"/><rect x="778.3" y="345.9" width="2" height="2" fill="#e84a1c"/><rect x="773.3" y="355.9" width="2" height="2" fill="#e8a01c"/><rect x="801.3" y="364.9" width="2" height="2" fill="#e8761c"/><rect x="801.3" y="384.9" width="2" height="2" fill="#d8c828"/><use href="#tng" x="796.8" y="383.9"/><use href="#cmp" x="796.8" y="415.8"/><rect x="728.8" y="394.8" width="2" height="2" fill="#e84a1c"/><rect x="723.8" y="404.8" width="2" height="2" fill="#e8a01c"/><rect x="738.7" y="394.8" width="2" height="2" fill="#e8a01c"/><rect x="733.7" y="404.8" width="2" height="2" fill="#e8761c"/><rect x="748.6" y="394.8" width="2" height="2" fill="#e8761c"/><rect x="743.6" y="404.8" width="2" height="2" fill="#d8c828"/><rect x="758.5" y="394.8" width="2" height="2" fill="#d8c828"/><rect x="753.5" y="404.8" width="2" height="2" fill="#e84a1c"/><rect x="768.4" y="394.8" width="2" height="2" fill="#e84a1c"/><rect x="763.4" y="404.8" width="2" height="2" fill="#e8a01c"/><rect x="778.3" y="394.8" width="2" height="2" fill="#e8a01c"/><rect x="773.3" y="404.8" width="2" height="2" fill="#e8761c"/><rect x="801.3" y="413.8" width="2" height="2" fill="#e8761c"/><rect x="801.3" y="433.8" width="2" height="2" fill="#d8c828"/><use href="#cmp" x="796.8" y="464.7"/><rect x="728.8" y="443.7" width="2" height="2" fill="#e8a01c"/><rect x="723.8" y="453.7" width="2" height="2" fill="#e8761c"/><rect x="738.7" y="443.7" width="2" height="2" fill="#e8761c"/><rect x="733.7" y="453.7" width="2" height="2" fill="#d8c828"/><rect x="748.6" y="443.7" width="2" height="2" fill="#d8c828"/><rect x="743.6" y="453.7" width="2" height="2" fill="#e84a1c"/><rect x="758.5" y="443.7" width="2" height="2" fill="#e84a1c"/><rect x="753.5" y="453.7" width="2" height="2" fill="#e8a01c"/><rect x="768.4" y="443.7" width="2" height="2" fill="#e8a01c"/><rect x="763.4" y="453.7" width="2" height="2" fill="#e8761c"/><rect x="778.3" y="443.7" width="2" height="2" fill="#e8761c"/><rect x="773.3" y="453.7" width="2" height="2" fill="#d8c828"/><rect x="801.3" y="462.7" width="2" height="2" fill="#e8761c"/><rect x="801.3" y="482.7" width="2" height="2" fill="#d8c828"/><use href="#cmp" x="796.8" y="513.6"/><rect x="728.8" y="492.6" width="2" height="2" fill="#e8761c"/><rect x="723.8" y="502.6" width="2" height="2" fill="#d8c828"/><rect x="738.7" y="492.6" width="2" height="2" fill="#d8c828"/><rect x="733.7" y="502.6" width="2" height="2" fill="#e84a1c"/><rect x="748.6" y="492.6" width="2" height="2" fill="#e84a1c"/><rect x="743.6" y="502.6" width="2" height="2" fill="#e8a01c"/><rect x="758.5" y="492.6" width="2" height="2" fill="#e8a01c"/><rect x="753.5" y="502.6" width="2" height="2" fill="#e8761c"/><rect x="768.4" y="492.6" width="2" height="2" fill="#e8761c"/><rect x="763.4" y="502.6" width="2" height="2" fill="#d8c828"/><rect x="778.3" y="492.6" width="2" height="2" fill="#d8c828"/><rect x="773.3" y="502.6" width="2" height="2" fill="#e84a1c"/><rect x="801.3" y="511.6" width="2" height="2" fill="#e8761c"/><rect x="801.3" y="531.6" width="2" height="2" fill="#d8c828"/><use href="#tng" x="796.8" y="530.6"/><use href="#cmp" x="796.8" y="562.5"/><rect x="728.8" y="541.5" width="2" height="2" fill="#d8c828"/><rect x="723.8" y="551.5" width="2" height="2" fill="#e84a1c"/><rect x="738.7" y="541.5" width="2" height="2" fill="#e84a1c"/><rect x="733.7" y="551.5" width="2" height="2" fill="#e8a01c"/><rect x="748.6" y="541.5" width="2" height="2" fill="#e8a01c"/><rect x="743.6" y="551.5" width="2" height="2" fill="#e8761c"/><rect x="758.5" y="541.5" width="2" height="2" fill="#e8761c"/><rect x="753.5" y="551.5" width="2" height="2" fill="#d8c828"/><rect x="768.4" y="541.5" width="2" height="2" fill="#d8c828"/><rect x="763.4" y="551.5" width="2" height="2" fill="#e84a1c"/><rect x="778.3" y="541.5" width="2" height="2" fill="#e84a1c"/><rect x="773.3" y="551.5" width="2" height="2" fill="#e8a01c"/><rect x="801.3" y="560.5" width="2" height="2" fill="#e8761c"/><rect x="801.3" y="580.5" width="2" height="2" fill="#d8c828"/><use href="#cmp" x="796.8" y="611.4"/><rect x="728.8" y="590.4" width="2" height="2" fill="#e84a1c"/><rect x="723.8" y="600.4" width="2" height="2" fill="#e8a01c"/><rect x="738.7" y="590.4" width="2" height="2" fill="#e8a01c"/><rect x="733.7" y="600.4" width="2" height="2" fill="#e8761c"/><rect x="748.6" y="590.4" width="2" height="2" fill="#e8761c"/><rect x="743.6" y="600.4" width="2" height="2" fill="#d8c828"/><rect x="758.5" y="590.4" width="2" height="2" fill="#d8c828"/><rect x="753.5" y="600.4" width="2" height="2" fill="#e84a1c"/><rect x="768.4" y="590.4" width="2" height="2" fill="#e84a1c"/><rect x="763.4" y="600.4" width="2" height="2" fill="#e8a01c"/><rect x="778.3" y="590.4" width="2" height="2" fill="#e8a01c"/><rect x="773.3" y="600.4" width="2" height="2" fill="#e8761c"/><rect x="801.3" y="609.4" width="2" height="2" fill="#e8761c"/><rect x="801.3" y="629.4" width="2" height="2" fill="#d8c828"/><use href="#cmp" x="796.8" y="660.3"/><rect x="728.8" y="639.3" width="2" height="2" fill="#e8a01c"/><rect x="723.8" y="649.3" width="2" height="2" fill="#e8761c"/><rect x="738.7" y="639.3" width="2" height="2" fill="#e8761c"/><rect x="733.7" y="649.3" width="2" height="2" fill="#d8c828"/><rect x="748.6" y="639.3" width="2" height="2" fill="#d8c828"/><rect x="743.6" y="649.3" width="2" height="2" fill="#e84a1c"/><rect x="758.5" y="639.3" width="2" height="2" fill="#e84a1c"/><rect x="753.5" y="649.3" width="2" height="2" fill="#e8a01c"/><rect x="768.4" y="639.3" width="2" height="2" fill="#e8a01c"/><rect x="763.4" y="649.3" width="2" height="2" fill="#e8761c"/><rect x="778.3" y="639.3" width="2" height="2" fill="#e8761c"/><rect x="773.3" y="649.3" width="2" height="2" fill="#d8c828"/><rect x="801.3" y="658.3" width="2" height="2" fill="#e8761c"/><rect x="801.3" y="678.3" width="2" height="2" fill="#d8c828"/><use href="#tng" x="796.8" y="677.3"/><use href="#cmp" x="796.8" y="709.2"/><rect x="728.8" y="688.2" width="2" height="2" fill="#e8761c"/><rect x="723.8" y="698.2" width="2" height="2" fill="#d8c828"/><rect x="738.7" y="688.2" width="2" height="2" fill="#d8c828"/><rect x="733.7" y="698.2" width="2" height="2" fill="#e84a1c"/><rect x="748.6" y="688.2" width="2" height="2" fill="#e84a1c"/><rect x="743.6" y="698.2" width="2" height="2" fill="#e8a01c"/><rect x="758.5" y="688.2" width="2" height="2" fill="#e8a01c"/><rect x="753.5" y="698.2" width="2" height="2" fill="#e8761c"/><rect x="768.4" y="688.2" width="2" height="2" fill="#e8761c"/><rect x="763.4" y="698.2" width="2" height="2" fill="#d8c828"/><rect x="778.3" y="688.2" width="2" height="2" fill="#d8c828"/><rect x="773.3" y="698.2" width="2" height="2" fill="#e84a1c"/><rect x="801.3" y="707.2" width="2" height="2" fill="#e8761c"/><rect x="801.3" y="727.2" width="2" height="2" fill="#d8c828"/><path d="M879.6 299 V745" stroke="#55a018" stroke-width="1.1"/><path d="M876.1 299 V745" stroke="#55a018" stroke-width="1" opacity=".8"/><use href="#cmp" x="879.6" y="318.0"/><rect x="811.6" y="307.0" width="2" height="2" fill="#d8c828"/><rect x="821.5" y="307.0" width="2" height="2" fill="#e84a1c"/><rect x="831.4" y="307.0" width="2" height="2" fill="#e8a01c"/><rect x="841.3" y="307.0" width="2" height="2" fill="#e8761c"/><rect x="851.2" y="307.0" width="2" height="2" fill="#d8c828"/><rect x="861.1" y="307.0" width="2" height="2" fill="#e84a1c"/><rect x="884.1" y="316.0" width="2" height="2" fill="#e8761c"/><rect x="884.1" y="336.0" width="2" height="2" fill="#d8c828"/><use href="#cmp" x="879.6" y="366.9"/><rect x="811.6" y="345.9" width="2" height="2" fill="#d8c828"/><rect x="806.6" y="355.9" width="2" height="2" fill="#e84a1c"/><rect x="821.5" y="345.9" width="2" height="2" fill="#e84a1c"/><rect x="816.5" y="355.9" width="2" height="2" fill="#e8a01c"/><rect x="831.4" y="345.9" width="2" height="2" fill="#e8a01c"/><rect x="826.4" y="355.9" width="2" height="2" fill="#e8761c"/><rect x="841.3" y="345.9" width="2" height="2" fill="#e8761c"/><rect x="836.3" y="355.9" width="2" height="2" fill="#d8c828"/><rect x="851.2" y="345.9" width="2" height="2" fill="#d8c828"/><rect x="846.2" y="355.9" width="2" height="2" fill="#e84a1c"/><rect x="861.1" y="345.9" width="2" height="2" fill="#e84a1c"/><rect x="856.1" y="355.9" width="2" height="2" fill="#e8a01c"/><rect x="884.1" y="364.9" width="2" height="2" fill="#e8761c"/><rect x="884.1" y="384.9" width="2" height="2" fill="#d8c828"/><use href="#tng" x="879.6" y="383.9"/><use href="#cmp" x="879.6" y="415.8"/><rect x="811.6" y="394.8" width="2" height="2" fill="#e84a1c"/><rect x="806.6" y="404.8" width="2" height="2" fill="#e8a01c"/><rect x="821.5" y="394.8" width="2" height="2" fill="#e8a01c"/><rect x="816.5" y="404.8" width="2" height="2" fill="#e8761c"/><rect x="831.4" y="394.8" width="2" height="2" fill="#e8761c"/><rect x="826.4" y="404.8" width="2" height="2" fill="#d8c828"/><rect x="841.3" y="394.8" width="2" height="2" fill="#d8c828"/><rect x="836.3" y="404.8" width="2" height="2" fill="#e84a1c"/><rect x="851.2" y="394.8" width="2" height="2" fill="#e84a1c"/><rect x="846.2" y="404.8" width="2" height="2" fill="#e8a01c"/><rect x="861.1" y="394.8" width="2" height="2" fill="#e8a01c"/><rect x="856.1" y="404.8" width="2" height="2" fill="#e8761c"/><rect x="884.1" y="413.8" width="2" height="2" fill="#e8761c"/><rect x="884.1" y="433.8" width="2" height="2" fill="#d8c828"/><use href="#cmp" x="879.6" y="464.7"/><rect x="811.6" y="443.7" width="2" height="2" fill="#e8a01c"/><rect x="806.6" y="453.7" width="2" height="2" fill="#e8761c"/><rect x="821.5" y="443.7" width="2" height="2" fill="#e8761c"/><rect x="816.5" y="453.7" width="2" height="2" fill="#d8c828"/><rect x="831.4" y="443.7" width="2" height="2" fill="#d8c828"/><rect x="826.4" y="453.7" width="2" height="2" fill="#e84a1c"/><rect x="841.3" y="443.7" width="2" height="2" fill="#e84a1c"/><rect x="836.3" y="453.7" width="2" height="2" fill="#e8a01c"/><rect x="851.2" y="443.7" width="2" height="2" fill="#e8a01c"/><rect x="846.2" y="453.7" width="2" height="2" fill="#e8761c"/><rect x="861.1" y="443.7" width="2" height="2" fill="#e8761c"/><rect x="856.1" y="453.7" width="2" height="2" fill="#d8c828"/><rect x="884.1" y="462.7" width="2" height="2" fill="#e8761c"/><rect x="884.1" y="482.7" width="2" height="2" fill="#d8c828"/><use href="#cmp" x="879.6" y="513.6"/><rect x="811.6" y="492.6" width="2" height="2" fill="#e8761c"/><rect x="806.6" y="502.6" width="2" height="2" fill="#d8c828"/><rect x="821.5" y="492.6" width="2" height="2" fill="#d8c828"/><rect x="816.5" y="502.6" width="2" height="2" fill="#e84a1c"/><rect x="831.4" y="492.6" width="2" height="2" fill="#e84a1c"/><rect x="826.4" y="502.6" width="2" height="2" fill="#e8a01c"/><rect x="841.3" y="492.6" width="2" height="2" fill="#e8a01c"/><rect x="836.3" y="502.6" width="2" height="2" fill="#e8761c"/><rect x="851.2" y="492.6" width="2" height="2" fill="#e8761c"/><rect x="846.2" y="502.6" width="2" height="2" fill="#d8c828"/><rect x="861.1" y="492.6" width="2" height="2" fill="#d8c828"/><rect x="856.1" y="502.6" width="2" height="2" fill="#e84a1c"/><rect x="884.1" y="511.6" width="2" height="2" fill="#e8761c"/><rect x="884.1" y="531.6" width="2" height="2" fill="#d8c828"/><use href="#tng" x="879.6" y="530.6"/><use href="#cmp" x="879.6" y="562.5"/><rect x="811.6" y="541.5" width="2" height="2" fill="#d8c828"/><rect x="806.6" y="551.5" width="2" height="2" fill="#e84a1c"/><rect x="821.5" y="541.5" width="2" height="2" fill="#e84a1c"/><rect x="816.5" y="551.5" width="2" height="2" fill="#e8a01c"/><rect x="831.4" y="541.5" width="2" height="2" fill="#e8a01c"/><rect x="826.4" y="551.5" width="2" height="2" fill="#e8761c"/><rect x="841.3" y="541.5" width="2" height="2" fill="#e8761c"/><rect x="836.3" y="551.5" width="2" height="2" fill="#d8c828"/><rect x="851.2" y="541.5" width="2" height="2" fill="#d8c828"/><rect x="846.2" y="551.5" width="2" height="2" fill="#e84a1c"/><rect x="861.1" y="541.5" width="2" height="2" fill="#e84a1c"/><rect x="856.1" y="551.5" width="2" height="2" fill="#e8a01c"/><rect x="884.1" y="560.5" width="2" height="2" fill="#e8761c"/><rect x="884.1" y="580.5" width="2" height="2" fill="#d8c828"/><use href="#cmp" x="879.6" y="611.4"/><rect x="811.6" y="590.4" width="2" height="2" fill="#e84a1c"/><rect x="806.6" y="600.4" width="2" height="2" fill="#e8a01c"/><rect x="821.5" y="590.4" width="2" height="2" fill="#e8a01c"/><rect x="816.5" y="600.4" width="2" height="2" fill="#e8761c"/><rect x="831.4" y="590.4" width="2" height="2" fill="#e8761c"/><rect x="826.4" y="600.4" width="2" height="2" fill="#d8c828"/><rect x="841.3" y="590.4" width="2" height="2" fill="#d8c828"/><rect x="836.3" y="600.4" width="2" height="2" fill="#e84a1c"/><rect x="851.2" y="590.4" width="2" height="2" fill="#e84a1c"/><rect x="846.2" y="600.4" width="2" height="2" fill="#e8a01c"/><rect x="861.1" y="590.4" width="2" height="2" fill="#e8a01c"/><rect x="856.1" y="600.4" width="2" height="2" fill="#e8761c"/><rect x="884.1" y="609.4" width="2" height="2" fill="#e8761c"/><rect x="884.1" y="629.4" width="2" height="2" fill="#d8c828"/><use href="#cmp" x="879.6" y="660.3"/><rect x="811.6" y="639.3" width="2" height="2" fill="#e8a01c"/><rect x="806.6" y="649.3" width="2" height="2" fill="#e8761c"/><rect x="821.5" y="639.3" width="2" height="2" fill="#e8761c"/><rect x="816.5" y="649.3" width="2" height="2" fill="#d8c828"/><rect x="831.4" y="639.3" width="2" height="2" fill="#d8c828"/><rect x="826.4" y="649.3" width="2" height="2" fill="#e84a1c"/><rect x="841.3" y="639.3" width="2" height="2" fill="#e84a1c"/><rect x="836.3" y="649.3" width="2" height="2" fill="#e8a01c"/><rect x="851.2" y="639.3" width="2" height="2" fill="#e8a01c"/><rect x="846.2" y="649.3" width="2" height="2" fill="#e8761c"/><rect x="861.1" y="639.3" width="2" height="2" fill="#e8761c"/><rect x="856.1" y="649.3" width="2" height="2" fill="#d8c828"/><rect x="884.1" y="658.3" width="2" height="2" fill="#e8761c"/><rect x="884.1" y="678.3" width="2" height="2" fill="#d8c828"/><use href="#tng" x="879.6" y="677.3"/><use href="#cmp" x="879.6" y="709.2"/><rect x="811.6" y="688.2" width="2" height="2" fill="#e8761c"/><rect x="806.6" y="698.2" width="2" height="2" fill="#d8c828"/><rect x="821.5" y="688.2" width="2" height="2" fill="#d8c828"/><rect x="816.5" y="698.2" width="2" height="2" fill="#e84a1c"/><rect x="831.4" y="688.2" width="2" height="2" fill="#e84a1c"/><rect x="826.4" y="698.2" width="2" height="2" fill="#e8a01c"/><rect x="841.3" y="688.2" width="2" height="2" fill="#e8a01c"/><rect x="836.3" y="698.2" width="2" height="2" fill="#e8761c"/><rect x="851.2" y="688.2" width="2" height="2" fill="#e8761c"/><rect x="846.2" y="698.2" width="2" height="2" fill="#d8c828"/><rect x="861.1" y="688.2" width="2" height="2" fill="#d8c828"/><rect x="856.1" y="698.2" width="2" height="2" fill="#e84a1c"/><rect x="884.1" y="707.2" width="2" height="2" fill="#e8761c"/><rect x="884.1" y="727.2" width="2" height="2" fill="#d8c828"/><path d="M962.4 299 V745" stroke="#55a018" stroke-width="1.1"/><path d="M958.9 299 V745" stroke="#55a018" stroke-width="1" opacity=".8"/><use href="#cmp" x="962.4" y="318.0"/><rect x="894.4" y="307.0" width="2" height="2" fill="#d8c828"/><rect x="904.3" y="307.0" width="2" height="2" fill="#e84a1c"/><rect x="914.2" y="307.0" width="2" height="2" fill="#e8a01c"/><rect x="924.1" y="307.0" width="2" height="2" fill="#e8761c"/><rect x="934.0" y="307.0" width="2" height="2" fill="#d8c828"/><rect x="943.9" y="307.0" width="2" height="2" fill="#e84a1c"/><rect x="966.9" y="316.0" width="2" height="2" fill="#e8761c"/><rect x="966.9" y="336.0" width="2" height="2" fill="#d8c828"/><use href="#cmp" x="962.4" y="366.9"/><rect x="894.4" y="345.9" width="2" height="2" fill="#d8c828"/><rect x="889.4" y="355.9" width="2" height="2" fill="#e84a1c"/><rect x="904.3" y="345.9" width="2" height="2" fill="#e84a1c"/><rect x="899.3" y="355.9" width="2" height="2" fill="#e8a01c"/><rect x="914.2" y="345.9" width="2" height="2" fill="#e8a01c"/><rect x="909.2" y="355.9" width="2" height="2" fill="#e8761c"/><rect x="924.1" y="345.9" width="2" height="2" fill="#e8761c"/><rect x="919.1" y="355.9" width="2" height="2" fill="#d8c828"/><rect x="934.0" y="345.9" width="2" height="2" fill="#d8c828"/><rect x="929.0" y="355.9" width="2" height="2" fill="#e84a1c"/><rect x="943.9" y="345.9" width="2" height="2" fill="#e84a1c"/><rect x="938.9" y="355.9" width="2" height="2" fill="#e8a01c"/><rect x="966.9" y="364.9" width="2" height="2" fill="#e8761c"/><rect x="966.9" y="384.9" width="2" height="2" fill="#d8c828"/><use href="#tng" x="962.4" y="383.9"/><use href="#cmp" x="962.4" y="415.8"/><rect x="894.4" y="394.8" width="2" height="2" fill="#e84a1c"/><rect x="889.4" y="404.8" width="2" height="2" fill="#e8a01c"/><rect x="904.3" y="394.8" width="2" height="2" fill="#e8a01c"/><rect x="899.3" y="404.8" width="2" height="2" fill="#e8761c"/><rect x="914.2" y="394.8" width="2" height="2" fill="#e8761c"/><rect x="909.2" y="404.8" width="2" height="2" fill="#d8c828"/><rect x="924.1" y="394.8" width="2" height="2" fill="#d8c828"/><rect x="919.1" y="404.8" width="2" height="2" fill="#e84a1c"/><rect x="934.0" y="394.8" width="2" height="2" fill="#e84a1c"/><rect x="929.0" y="404.8" width="2" height="2" fill="#e8a01c"/><rect x="943.9" y="394.8" width="2" height="2" fill="#e8a01c"/><rect x="938.9" y="404.8" width="2" height="2" fill="#e8761c"/><rect x="966.9" y="413.8" width="2" height="2" fill="#e8761c"/><rect x="966.9" y="433.8" width="2" height="2" fill="#d8c828"/><use href="#cmp" x="962.4" y="464.7"/><rect x="894.4" y="443.7" width="2" height="2" fill="#e8a01c"/><rect x="889.4" y="453.7" width="2" height="2" fill="#e8761c"/><rect x="904.3" y="443.7" width="2" height="2" fill="#e8761c"/><rect x="899.3" y="453.7" width="2" height="2" fill="#d8c828"/><rect x="914.2" y="443.7" width="2" height="2" fill="#d8c828"/><rect x="909.2" y="453.7" width="2" height="2" fill="#e84a1c"/><rect x="924.1" y="443.7" width="2" height="2" fill="#e84a1c"/><rect x="919.1" y="453.7" width="2" height="2" fill="#e8a01c"/><rect x="934.0" y="443.7" width="2" height="2" fill="#e8a01c"/><rect x="929.0" y="453.7" width="2" height="2" fill="#e8761c"/><rect x="943.9" y="443.7" width="2" height="2" fill="#e8761c"/><rect x="938.9" y="453.7" width="2" height="2" fill="#d8c828"/><rect x="966.9" y="462.7" width="2" height="2" fill="#e8761c"/><rect x="966.9" y="482.7" width="2" height="2" fill="#d8c828"/><use href="#cmp" x="962.4" y="513.6"/><rect x="894.4" y="492.6" width="2" height="2" fill="#e8761c"/><rect x="889.4" y="502.6" width="2" height="2" fill="#d8c828"/><rect x="904.3" y="492.6" width="2" height="2" fill="#d8c828"/><rect x="899.3" y="502.6" width="2" height="2" fill="#e84a1c"/><rect x="914.2" y="492.6" width="2" height="2" fill="#e84a1c"/><rect x="909.2" y="502.6" width="2" height="2" fill="#e8a01c"/><rect x="924.1" y="492.6" width="2" height="2" fill="#e8a01c"/><rect x="919.1" y="502.6" width="2" height="2" fill="#e8761c"/><rect x="934.0" y="492.6" width="2" height="2" fill="#e8761c"/><rect x="929.0" y="502.6" width="2" height="2" fill="#d8c828"/><rect x="943.9" y="492.6" width="2" height="2" fill="#d8c828"/><rect x="938.9" y="502.6" width="2" height="2" fill="#e84a1c"/><rect x="966.9" y="511.6" width="2" height="2" fill="#e8761c"/><rect x="966.9" y="531.6" width="2" height="2" fill="#d8c828"/><use href="#tng" x="962.4" y="530.6"/><use href="#cmp" x="962.4" y="562.5"/><rect x="894.4" y="541.5" width="2" height="2" fill="#d8c828"/><rect x="889.4" y="551.5" width="2" height="2" fill="#e84a1c"/><rect x="904.3" y="541.5" width="2" height="2" fill="#e84a1c"/><rect x="899.3" y="551.5" width="2" height="2" fill="#e8a01c"/><rect x="914.2" y="541.5" width="2" height="2" fill="#e8a01c"/><rect x="909.2" y="551.5" width="2" height="2" fill="#e8761c"/><rect x="924.1" y="541.5" width="2" height="2" fill="#e8761c"/><rect x="919.1" y="551.5" width="2" height="2" fill="#d8c828"/><rect x="934.0" y="541.5" width="2" height="2" fill="#d8c828"/><rect x="929.0" y="551.5" width="2" height="2" fill="#e84a1c"/><rect x="943.9" y="541.5" width="2" height="2" fill="#e84a1c"/><rect x="938.9" y="551.5" width="2" height="2" fill="#e8a01c"/><rect x="966.9" y="560.5" width="2" height="2" fill="#e8761c"/><rect x="966.9" y="580.5" width="2" height="2" fill="#d8c828"/><use href="#cmp" x="962.4" y="611.4"/><rect x="894.4" y="590.4" width="2" height="2" fill="#e84a1c"/><rect x="889.4" y="600.4" width="2" height="2" fill="#e8a01c"/><rect x="904.3" y="590.4" width="2" height="2" fill="#e8a01c"/><rect x="899.3" y="600.4" width="2" height="2" fill="#e8761c"/><rect x="914.2" y="590.4" width="2" height="2" fill="#e8761c"/><rect x="909.2" y="600.4" width="2" height="2" fill="#d8c828"/><rect x="924.1" y="590.4" width="2" height="2" fill="#d8c828"/><rect x="919.1" y="600.4" width="2" height="2" fill="#e84a1c"/><rect x="934.0" y="590.4" width="2" height="2" fill="#e84a1c"/><rect x="929.0" y="600.4" width="2" height="2" fill="#e8a01c"/><rect x="943.9" y="590.4" width="2" height="2" fill="#e8a01c"/><rect x="938.9" y="600.4" width="2" height="2" fill="#e8761c"/><rect x="966.9" y="609.4" width="2" height="2" fill="#e8761c"/><rect x="966.9" y="629.4" width="2" height="2" fill="#d8c828"/><use href="#cmp" x="962.4" y="660.3"/><rect x="894.4" y="639.3" width="2" height="2" fill="#e8a01c"/><rect x="889.4" y="649.3" width="2" height="2" fill="#e8761c"/><rect x="904.3" y="639.3" width="2" height="2" fill="#e8761c"/><rect x="899.3" y="649.3" width="2" height="2" fill="#d8c828"/><rect x="914.2" y="639.3" width="2" height="2" fill="#d8c828"/><rect x="909.2" y="649.3" width="2" height="2" fill="#e84a1c"/><rect x="924.1" y="639.3" width="2" height="2" fill="#e84a1c"/><rect x="919.1" y="649.3" width="2" height="2" fill="#e8a01c"/><rect x="934.0" y="639.3" width="2" height="2" fill="#e8a01c"/><rect x="929.0" y="649.3" width="2" height="2" fill="#e8761c"/><rect x="943.9" y="639.3" width="2" height="2" fill="#e8761c"/><rect x="938.9" y="649.3" width="2" height="2" fill="#d8c828"/><rect x="966.9" y="658.3" width="2" height="2" fill="#e8761c"/><rect x="966.9" y="678.3" width="2" height="2" fill="#d8c828"/><use href="#tng" x="962.4" y="677.3"/><use href="#cmp" x="962.4" y="709.2"/><rect x="894.4" y="688.2" width="2" height="2" fill="#e8761c"/><rect x="889.4" y="698.2" width="2" height="2" fill="#d8c828"/><rect x="904.3" y="688.2" width="2" height="2" fill="#d8c828"/><rect x="899.3" y="698.2" width="2" height="2" fill="#e84a1c"/><rect x="914.2" y="688.2" width="2" height="2" fill="#e84a1c"/><rect x="909.2" y="698.2" width="2" height="2" fill="#e8a01c"/><rect x="924.1" y="688.2" width="2" height="2" fill="#e8a01c"/><rect x="919.1" y="698.2" width="2" height="2" fill="#e8761c"/><rect x="934.0" y="688.2" width="2" height="2" fill="#e8761c"/><rect x="929.0" y="698.2" width="2" height="2" fill="#d8c828"/><rect x="943.9" y="688.2" width="2" height="2" fill="#d8c828"/><rect x="938.9" y="698.2" width="2" height="2" fill="#e84a1c"/><rect x="966.9" y="707.2" width="2" height="2" fill="#e8761c"/><rect x="966.9" y="727.2" width="2" height="2" fill="#d8c828"/><path d="M1045.2 299 V745" stroke="#55a018" stroke-width="1.1"/><path d="M1041.7 299 V745" stroke="#55a018" stroke-width="1" opacity=".8"/><use href="#cmp" x="1045.2" y="318.0"/><rect x="977.2" y="307.0" width="2" height="2" fill="#d8c828"/><rect x="987.1" y="307.0" width="2" height="2" fill="#e84a1c"/><rect x="997.0" y="307.0" width="2" height="2" fill="#e8a01c"/><rect x="1006.9" y="307.0" width="2" height="2" fill="#e8761c"/><rect x="1016.8" y="307.0" width="2" height="2" fill="#d8c828"/><rect x="1026.7" y="307.0" width="2" height="2" fill="#e84a1c"/><rect x="1049.7" y="316.0" width="2" height="2" fill="#e8761c"/><rect x="1049.7" y="336.0" width="2" height="2" fill="#d8c828"/><use href="#cmp" x="1045.2" y="366.9"/><rect x="977.2" y="345.9" width="2" height="2" fill="#d8c828"/><rect x="972.2" y="355.9" width="2" height="2" fill="#e84a1c"/><rect x="987.1" y="345.9" width="2" height="2" fill="#e84a1c"/><rect x="982.1" y="355.9" width="2" height="2" fill="#e8a01c"/><rect x="997.0" y="345.9" width="2" height="2" fill="#e8a01c"/><rect x="992.0" y="355.9" width="2" height="2" fill="#e8761c"/><rect x="1006.9" y="345.9" width="2" height="2" fill="#e8761c"/><rect x="1001.9" y="355.9" width="2" height="2" fill="#d8c828"/><rect x="1016.8" y="345.9" width="2" height="2" fill="#d8c828"/><rect x="1011.8" y="355.9" width="2" height="2" fill="#e84a1c"/><rect x="1026.7" y="345.9" width="2" height="2" fill="#e84a1c"/><rect x="1021.7" y="355.9" width="2" height="2" fill="#e8a01c"/><rect x="1049.7" y="364.9" width="2" height="2" fill="#e8761c"/><rect x="1049.7" y="384.9" width="2" height="2" fill="#d8c828"/><use href="#tng" x="1045.2" y="383.9"/><use href="#cmp" x="1045.2" y="415.8"/><rect x="977.2" y="394.8" width="2" height="2" fill="#e84a1c"/><rect x="972.2" y="404.8" width="2" height="2" fill="#e8a01c"/><rect x="987.1" y="394.8" width="2" height="2" fill="#e8a01c"/><rect x="982.1" y="404.8" width="2" height="2" fill="#e8761c"/><rect x="997.0" y="394.8" width="2" height="2" fill="#e8761c"/><rect x="992.0" y="404.8" width="2" height="2" fill="#d8c828"/><rect x="1006.9" y="394.8" width="2" height="2" fill="#d8c828"/><rect x="1001.9" y="404.8" width="2" height="2" fill="#e84a1c"/><rect x="1016.8" y="394.8" width="2" height="2" fill="#e84a1c"/><rect x="1011.8" y="404.8" width="2" height="2" fill="#e8a01c"/><rect x="1026.7" y="394.8" width="2" height="2" fill="#e8a01c"/><rect x="1021.7" y="404.8" width="2" height="2" fill="#e8761c"/><rect x="1049.7" y="413.8" width="2" height="2" fill="#e8761c"/><rect x="1049.7" y="433.8" width="2" height="2" fill="#d8c828"/><use href="#cmp" x="1045.2" y="464.7"/><rect x="977.2" y="443.7" width="2" height="2" fill="#e8a01c"/><rect x="972.2" y="453.7" width="2" height="2" fill="#e8761c"/><rect x="987.1" y="443.7" width="2" height="2" fill="#e8761c"/><rect x="982.1" y="453.7" width="2" height="2" fill="#d8c828"/><rect x="997.0" y="443.7" width="2" height="2" fill="#d8c828"/><rect x="992.0" y="453.7" width="2" height="2" fill="#e84a1c"/><rect x="1006.9" y="443.7" width="2" height="2" fill="#e84a1c"/><rect x="1001.9" y="453.7" width="2" height="2" fill="#e8a01c"/><rect x="1016.8" y="443.7" width="2" height="2" fill="#e8a01c"/><rect x="1011.8" y="453.7" width="2" height="2" fill="#e8761c"/><rect x="1026.7" y="443.7" width="2" height="2" fill="#e8761c"/><rect x="1021.7" y="453.7" width="2" height="2" fill="#d8c828"/><rect x="1049.7" y="462.7" width="2" height="2" fill="#e8761c"/><rect x="1049.7" y="482.7" width="2" height="2" fill="#d8c828"/><use href="#cmp" x="1045.2" y="513.6"/><rect x="977.2" y="492.6" width="2" height="2" fill="#e8761c"/><rect x="972.2" y="502.6" width="2" height="2" fill="#d8c828"/><rect x="987.1" y="492.6" width="2" height="2" fill="#d8c828"/><rect x="982.1" y="502.6" width="2" height="2" fill="#e84a1c"/><rect x="997.0" y="492.6" width="2" height="2" fill="#e84a1c"/><rect x="992.0" y="502.6" width="2" height="2" fill="#e8a01c"/><rect x="1006.9" y="492.6" width="2" height="2" fill="#e8a01c"/><rect x="1001.9" y="502.6" width="2" height="2" fill="#e8761c"/><rect x="1016.8" y="492.6" width="2" height="2" fill="#e8761c"/><rect x="1011.8" y="502.6" width="2" height="2" fill="#d8c828"/><rect x="1026.7" y="492.6" width="2" height="2" fill="#d8c828"/><rect x="1021.7" y="502.6" width="2" height="2" fill="#e84a1c"/><rect x="1049.7" y="511.6" width="2" height="2" fill="#e8761c"/><rect x="1049.7" y="531.6" width="2" height="2" fill="#d8c828"/><use href="#tng" x="1045.2" y="530.6"/><use href="#cmp" x="1045.2" y="562.5"/><rect x="977.2" y="541.5" width="2" height="2" fill="#d8c828"/><rect x="972.2" y="551.5" width="2" height="2" fill="#e84a1c"/><rect x="987.1" y="541.5" width="2" height="2" fill="#e84a1c"/><rect x="982.1" y="551.5" width="2" height="2" fill="#e8a01c"/><rect x="997.0" y="541.5" width="2" height="2" fill="#e8a01c"/><rect x="992.0" y="551.5" width="2" height="2" fill="#e8761c"/><rect x="1006.9" y="541.5" width="2" height="2" fill="#e8761c"/><rect x="1001.9" y="551.5" width="2" height="2" fill="#d8c828"/><rect x="1016.8" y="541.5" width="2" height="2" fill="#d8c828"/><rect x="1011.8" y="551.5" width="2" height="2" fill="#e84a1c"/><rect x="1026.7" y="541.5" width="2" height="2" fill="#e84a1c"/><rect x="1021.7" y="551.5" width="2" height="2" fill="#e8a01c"/><rect x="1049.7" y="560.5" width="2" height="2" fill="#e8761c"/><rect x="1049.7" y="580.5" width="2" height="2" fill="#d8c828"/><use href="#cmp" x="1045.2" y="611.4"/><rect x="977.2" y="590.4" width="2" height="2" fill="#e84a1c"/><rect x="972.2" y="600.4" width="2" height="2" fill="#e8a01c"/><rect x="987.1" y="590.4" width="2" height="2" fill="#e8a01c"/><rect x="982.1" y="600.4" width="2" height="2" fill="#e8761c"/><rect x="997.0" y="590.4" width="2" height="2" fill="#e8761c"/><rect x="992.0" y="600.4" width="2" height="2" fill="#d8c828"/><rect x="1006.9" y="590.4" width="2" height="2" fill="#d8c828"/><rect x="1001.9" y="600.4" width="2" height="2" fill="#e84a1c"/><rect x="1016.8" y="590.4" width="2" height="2" fill="#e84a1c"/><rect x="1011.8" y="600.4" width="2" height="2" fill="#e8a01c"/><rect x="1026.7" y="590.4" width="2" height="2" fill="#e8a01c"/><rect x="1021.7" y="600.4" width="2" height="2" fill="#e8761c"/><rect x="1049.7" y="609.4" width="2" height="2" fill="#e8761c"/><rect x="1049.7" y="629.4" width="2" height="2" fill="#d8c828"/><use href="#cmp" x="1045.2" y="660.3"/><rect x="977.2" y="639.3" width="2" height="2" fill="#e8a01c"/><rect x="972.2" y="649.3" width="2" height="2" fill="#e8761c"/><rect x="987.1" y="639.3" width="2" height="2" fill="#e8761c"/><rect x="982.1" y="649.3" width="2" height="2" fill="#d8c828"/><rect x="997.0" y="639.3" width="2" height="2" fill="#d8c828"/><rect x="992.0" y="649.3" width="2" height="2" fill="#e84a1c"/><rect x="1006.9" y="639.3" width="2" height="2" fill="#e84a1c"/><rect x="1001.9" y="649.3" width="2" height="2" fill="#e8a01c"/><rect x="1016.8" y="639.3" width="2" height="2" fill="#e8a01c"/><rect x="1011.8" y="649.3" width="2" height="2" fill="#e8761c"/><rect x="1026.7" y="639.3" width="2" height="2" fill="#e8761c"/><rect x="1021.7" y="649.3" width="2" height="2" fill="#d8c828"/><rect x="1049.7" y="658.3" width="2" height="2" fill="#e8761c"/><rect x="1049.7" y="678.3" width="2" height="2" fill="#d8c828"/><use href="#tng" x="1045.2" y="677.3"/><use href="#cmp" x="1045.2" y="709.2"/><rect x="977.2" y="688.2" width="2" height="2" fill="#e8761c"/><rect x="972.2" y="698.2" width="2" height="2" fill="#d8c828"/><rect x="987.1" y="688.2" width="2" height="2" fill="#d8c828"/><rect x="982.1" y="698.2" width="2" height="2" fill="#e84a1c"/><rect x="997.0" y="688.2" width="2" height="2" fill="#e84a1c"/><rect x="992.0" y="698.2" width="2" height="2" fill="#e8a01c"/><rect x="1006.9" y="688.2" width="2" height="2" fill="#e8a01c"/><rect x="1001.9" y="698.2" width="2" height="2" fill="#e8761c"/><rect x="1016.8" y="688.2" width="2" height="2" fill="#e8761c"/><rect x="1011.8" y="698.2" width="2" height="2" fill="#d8c828"/><rect x="1026.7" y="688.2" width="2" height="2" fill="#d8c828"/><rect x="1021.7" y="698.2" width="2" height="2" fill="#e84a1c"/><rect x="1049.7" y="707.2" width="2" height="2" fill="#e8761c"/><rect x="1049.7" y="727.2" width="2" height="2" fill="#d8c828"/><rect x="592" y="540" width="3" height="210" fill="#5a9a1c"/><rect x="663.500" y="299" width="54" height="43" stroke="#fff" stroke-width="1.15" fill="none"/><path d="M663.500 299 L1001 86 M717.500 299 L1073 194 M717.500 342 L1075 412 M663.500 342 L1075 509" stroke="#fff" stroke-width="1.15" fill="none"/><rect x="673.500" y="594" width="39.500" height="34.500" stroke="#fff" stroke-width="1.15" fill="none"/><path d="M673.500 594 L1047 526 M713 594 L1045 572.500 M713 628.500 L1045 742 M673.500 628.500 L806 746" stroke="#fff" stroke-width="1.15" fill="none"/></g></svg>
<div class="a" style="left:10px;top:428px;width:509px;height:611px;border-radius:7px 7px 2px 2px;box-shadow:0 0 0 1px rgba(0,0,0,.85),0 2px 10px rgba(0,0,0,.5);overflow:hidden"><div class="a" style="left:0;top:0;width:509px;height:29px;background:linear-gradient(90deg,#bfeeee 0,#a6e4e0 150px,#79d8d0 156px,#1a2222 170px,#050505 100%)"></div><div class="a" style="left:0;top:29px;width:7px;height:582px;background:linear-gradient(90deg,#9adfd8,#6ac8bc)"></div><div class="a" style="left:502px;top:29px;width:7px;height:582px;background:#060606"></div><div class="a" style="left:0;top:604px;width:509px;height:7px;background:linear-gradient(90deg,#8fe0dc 0,#8fe0dc 100%)"></div><div class="a" style="left:0;top:0;width:509px;height:611px;border-radius:7px 7px 2px 2px;box-shadow:inset 0 0 0 1px rgba(255,255,255,.6)"></div><div class="a" style="left:6px;top:28px;width:497px;height:577px;box-shadow:0 0 0 1px rgba(255,255,255,.55);border:1px solid rgba(0,0,0,.7)"></div></div>
<div class="a" style="left:14px;top:432px;width:150px;height:22px;background:linear-gradient(90deg,rgba(215,245,245,.9),rgba(150,225,215,.9) 70%,rgba(110,215,205,.6));filter:blur(2px)"></div>
<svg class="a" style="left:17px;top:435px" width="16" height="16"><use href="#xi"/></svg>
<div class="a ui" style="left:38px;top:434px;line-height:16px;font-size:12.6px">Results viewer</div>
<div class="a t" style="left:17px;top:456px;width:495px;height:577px;"></div>
<div class="a " style="left:17px;top:456px;width:495px;height:2px;background:#1e5e50"></div>
<div class="a " style="left:17px;top:456px;width:2px;height:577px;background:#1e5e50"></div>
<div class="a t" style="left:19px;top:459px;width:493px;height:26px;background:#000"></div>
<div class="a t upt" style="left:20px;top:460px;width:492px;height:23px;font:16.6px 'Liberation Serif',serif;line-height:22px;padding-left:179px;-webkit-text-stroke:.35px #000;white-space:pre">Signal Layer Checks</div>
<div class="a " style="left:18px;top:487px;width:496px;height:30px;background:#000"></div>
<div class="a t upt" style="left:19px;top:488px;width:49px;height:28px;"></div>
<div class="a c upc" style="left:21px;top:491px;width:45px;height:23px;font:italic 15px 'Liberation Mono',monospace;line-height:22px;text-align:center">None</div>
<div class="a c" style="left:69px;top:488px;width:77px;height:28px;font:italic bold 15px 'Liberation Mono',monospace;line-height:27px;text-align:center">Layers</div>
<div class="a t upt" style="left:147px;top:488px;width:40px;height:28px;"></div>
<div class="a c upc" style="left:149px;top:491px;width:36px;height:23px;font:italic 15px 'Liberation Mono',monospace;line-height:22px;text-align:center">All</div>
<div class="a t" style="left:187px;top:488px;width:3px;height:28px;"></div>
<div class="a t upt" style="left:190px;top:488px;width:324px;height:28px;"></div>
<div class="a c upc" style="left:192px;top:491px;width:320px;height:23px;font:italic bold 15px 'Liberation Mono',monospace;line-height:22px;padding-left:34px;white-space:pre">Category</div>
<div class="a t dnt" style="left:19px;top:517px;width:169px;height:392px;"></div>
<div class="a t" style="left:21px;top:519px;width:149px;height:388px;box-shadow:inset 1px 1px 0 #2f8a72,inset -2px -2px 0 #b4efe0"></div>
<div class="a " style="left:23px;top:521px;width:141px;height:16px;background:#000;color:#56ccb0;font:16px 'Liberation Mono',monospace;line-height:14px;letter-spacing:.2px">cs</div>
<div class="a " style="left:23px;top:539px;width:141px;height:16px;background:#000;color:#56ccb0;font:16px 'Liberation Mono',monospace;line-height:14px;letter-spacing:.2px">ss</div>
<div class="a t dnt" style="left:173px;top:519px;width:13px;height:388px;"></div>
<svg class="a" style="left:174px;top:520px" width="11" height="12"><path d="M5.5 1 L10 11 H1 Z" fill="#56ccb0" stroke="#d0fff2" stroke-width="1.2"/><path d="M10 11H1" stroke="#2f8a72" stroke-width="1.2"/></svg>
<div class="a t upt" style="left:175px;top:533px;width:9px;height:370px;"></div>
<div class="a t dnt" style="left:189px;top:517px;width:325px;height:392px;"></div>
<div class="a t" style="left:191px;top:519px;width:300px;height:388px;box-shadow:inset 1px 1px 0 #2f8a72,inset -2px -2px 0 #b4efe0"></div>
<div class="a t dnt" style="left:493px;top:519px;width:13px;height:388px;"></div>
<div class="a t upt" style="left:495px;top:533px;width:9px;height:300px;"></div>
<div class="a" style="left:194px;top:523px;font:bold 15px 'Liberation Mono',monospace;line-height:17px;white-space:pre;letter-spacing:.05px">SMD to SMD (42)</div>
<div class="a" style="left:194px;top:541px;font:bold 15px 'Liberation Mono',monospace;line-height:17px;white-space:pre;letter-spacing:.05px">Via to Via (381)</div>
<div class="a" style="left:194px;top:559px;font:bold 15px 'Liberation Mono',monospace;line-height:17px;white-space:pre;letter-spacing:.05px">Pad to circuit (295)</div>
<div class="a" style="left:194px;top:577px;font:bold 15px 'Liberation Mono',monospace;line-height:17px;white-space:pre;letter-spacing:.05px">Circuit to circuit (108)</div>
<div class="a" style="left:194px;top:595px;font:bold 15px 'Liberation Mono',monospace;line-height:17px;white-space:pre;letter-spacing:.05px">Same Net Spacing (289)</div>
<div class="a" style="left:194px;top:613px;font:bold 15px 'Liberation Mono',monospace;line-height:17px;white-space:pre;letter-spacing:.05px">Text to text (11)</div>
<div class="a" style="left:194px;top:631px;font:bold 15px 'Liberation Mono',monospace;line-height:17px;white-space:pre;letter-spacing:.05px">PTH to Copper (74)</div>
<div class="a" style="left:194px;top:649px;font:bold 15px 'Liberation Mono',monospace;line-height:17px;white-space:pre;letter-spacing:.05px">Shaved SMD (272)</div>
<div class="a" style="left:194px;top:667px;font:bold 15px 'Liberation Mono',monospace;line-height:17px;white-space:pre;letter-spacing:.05px">PTH (Comp) Annular ring (14)</div>
<div class="a " style="left:194px;top:685px;width:293px;height:15px;background:#000;color:#56ccb0;font:bold 15px 'Liberation Mono',monospace;line-height:17px;white-space:pre;letter-spacing:.05px;line-height:16px">VIA Annular ring (2600)</div>
<div class="a" style="left:194px;top:703px;font:bold 15px 'Liberation Mono',monospace;line-height:17px;white-space:pre;letter-spacing:.05px">Spacing length (39)</div>
<div class="a" style="left:194px;top:721px;font:bold 15px 'Liberation Mono',monospace;line-height:17px;white-space:pre;letter-spacing:.05px">Pads (6600)</div>
<div class="a" style="left:194px;top:739px;font:bold 15px 'Liberation Mono',monospace;line-height:17px;white-space:pre;letter-spacing:.05px">Lines (11487)</div>
<div class="a" style="left:194px;top:757px;font:bold 15px 'Liberation Mono',monospace;line-height:17px;white-space:pre;letter-spacing:.05px">Stubs (0)</div>
<div class="a t dnt" style="left:19px;top:907px;width:493px;height:14px;"></div>
<svg class="a" style="left:21px;top:908px" width="12" height="12"><path d="M1 6 L11 1 V11 Z" fill="#56ccb0" stroke="#d0fff2" stroke-width="1.2"/></svg>
<div class="a t upt" style="left:34px;top:909px;width:470px;height:10px;"></div>
<div class="a " style="left:19px;top:921px;width:493px;height:36px;background:#000"></div>
<div class="a t upt" style="left:20px;top:923px;width:492px;height:31px;"></div>
<div class="a c upc cb" style="left:25px;top:926px;width:484px;height:26px;line-height:25px;padding-left:5px">Replace layers</div>
<div class="a t" style="left:19px;top:957px;width:493px;height:19px;"></div>
<div class="a " style="left:17px;top:975px;width:495px;height:2px;background:#000"></div>
<div class="a " style="left:18px;top:977px;width:494px;height:21px;background:#fffacd;font:bold 15px 'Liberation Mono',monospace;line-height:20px;padding-left:2px;white-space:pre;box-shadow:inset 0 -1px 0 #000">ERF--&gt; via_ar = </div>
<div class="a t upt" style="left:18px;top:999px;width:494px;height:34px;"></div>
<div class="a c upc cb" style="left:21px;top:1002px;width:489px;height:29px;line-height:28px;padding-left:121px">Close</div>
<div class="a " style="left:510.5px;top:456px;width:3px;height:577px;background:#050505"></div>
<div class="a " style="left:513.5px;top:456px;width:1px;height:577px;background:#c8c8c8"></div>
<div class="a" style="left:1073px;top:0px;width:587px;height:497px;border-radius:7px 7px 2px 2px;box-shadow:0 0 0 1px rgba(0,0,0,.85),0 2px 10px rgba(0,0,0,.5);overflow:hidden"><div class="a" style="left:0;top:0;width:587px;height:29px;background:linear-gradient(rgba(255,255,255,.18) 0,rgba(255,255,255,.04) 3px,rgba(0,0,0,0) 60%),linear-gradient(90deg,#08090a 0,#0a0b0c 55%,#2c2f31 85%,#34373a 100%)"></div><div class="a" style="left:0;top:29px;width:7px;height:468px;background:linear-gradient(#bfeef0 0,#bfeef0 54px,#303838 58px,#0a0a0a 100%)"></div><div class="a" style="left:580px;top:29px;width:7px;height:468px;background:linear-gradient(#dfe8ff 0,#c8d8f0 50px,#303838 80px,#0a0a0a 100%)"></div><div class="a" style="left:0;top:490px;width:587px;height:7px;background:#080808"></div><div class="a" style="left:0;top:0;width:587px;height:497px;border-radius:7px 7px 2px 2px;box-shadow:inset 0 0 0 1px rgba(255,255,255,.6)"></div><div class="a" style="left:6px;top:28px;width:575px;height:463px;box-shadow:0 0 0 1px rgba(255,255,255,.55);border:1px solid rgba(0,0,0,.7)"></div></div>
<div class="cap" style="left:1606px;top:0px;width:48px;background:linear-gradient(#5a5e61,#303335 45%,#1a1c1e 50%,#2a2d2f)"></div>
<svg class="a" style="left:1624px;top:4px" width="12" height="10"><use href="#cx"/></svg>
<div class="a" style="left:1080px;top:5px;width:100px;height:20px;background:rgba(255,255,255,.5);filter:blur(5px);border-radius:10px"></div>
<svg class="a" style="left:1080px;top:7px" width="16" height="16"><use href="#xi"/></svg>
<div class="a ui" style="left:1101px;top:6px;line-height:16px;font-size:12.4px;letter-spacing:.3px">Popview - 1</div>
<div class="a " style="left:1079px;top:29px;width:574px;height:466px;background:#3f8f7c"></div>
<div class="a " style="left:1083px;top:33px;width:531px;height:462px;background:#000"></div>
<div class="a t" style="left:1614px;top:29px;width:40px;height:466px;"></div>
<div class="a " style="left:1614px;top:29px;width:2px;height:466px;background:#b4efe0"></div>
<div class="a " style="left:1616px;top:30px;width:38px;height:36px;background:#000"></div>
<div class="a t upt" style="left:1617px;top:31px;width:36px;height:34px;"></div>
<div class="a c upc" style="left:1621px;top:35px;width:28px;height:26px;"></div>
<svg class="a" style="left:1625px;top:38px" width="20" height="20" fill="none" stroke="#000" stroke-width="1.6"><rect x="1" y="1" width="18" height="18"/><rect x="4" y="6" width="10" height="10"/><rect x="12" y="3" width="5" height="5" stroke-width="1"/><path d="M6 11H12M6 11l3-3M6 11l3 3"/></svg>
<div class="a " style="left:1616px;top:66px;width:38px;height:36px;background:#000"></div>
<div class="a t upt" style="left:1617px;top:67px;width:36px;height:34px;"></div>
<div class="a c upc" style="left:1621px;top:71px;width:28px;height:26px;"></div>
<svg class="a" style="left:0;top:0" width="1920" height="1044" viewBox="0 0 1920 1044"><circle cx="1105" cy="147.5" r="7" fill="#4b9b0c"/><rect x="1102.5" y="145" width="5" height="5" fill="#c8a414"/><circle cx="1201.5" cy="147.5" r="7" fill="#4b9b0c"/><rect x="1199.0" y="145" width="5" height="5" fill="#c8a414"/><circle cx="1297.5" cy="147.5" r="7" fill="#4b9b0c"/><rect x="1295.0" y="145" width="5" height="5" fill="#c8a414"/><circle cx="1393.5" cy="147.5" r="7" fill="#4b9b0c"/><rect x="1391.0" y="145" width="5" height="5" fill="#c8a414"/><rect x="1583.5" y="33" width="11.5" height="50" fill="#4b9b0c"/><path d="M1172.300 323 L1236.400 258.900 H1326" fill="none" stroke="#4b9b0c" stroke-width="11.6" stroke-linejoin="round"/><path d="M1324.200 330.800 L1335 341.500 H1410" fill="none" stroke="#4b9b0c" stroke-width="10.8" stroke-linejoin="round"/><rect x="1404.5" y="168" width="11" height="183" fill="#4b9b0c"/><rect x="1401" y="168" width="18" height="18" fill="#4b9b0c"/><rect x="1436" y="168" width="7" height="18" fill="#4b9b0c"/><rect x="1401" y="202" width="18" height="20" fill="#4b9b0c"/><rect x="1436" y="202" width="7" height="20" fill="#4b9b0c"/><rect x="1401" y="244" width="18" height="19" fill="#4b9b0c"/><rect x="1436" y="244" width="7" height="19" fill="#4b9b0c"/><rect x="1401" y="288" width="18" height="18.600000000000023" fill="#4b9b0c"/><rect x="1436" y="288" width="7" height="18.600000000000023" fill="#4b9b0c"/><rect x="1401" y="332" width="18" height="18.600000000000023" fill="#4b9b0c"/><rect x="1436" y="332" width="7" height="18.600000000000023" fill="#4b9b0c"/><circle cx="1326.6" cy="259.4" r="10.2" fill="#4b9b0c"/><circle cx="1326.6" cy="259.4" r="7.7" fill="#3f6bff"/><circle cx="1172.3" cy="323" r="10.2" fill="#4b9b0c"/><circle cx="1172.3" cy="323" r="7.7" fill="#3f6bff"/><circle cx="1324.2" cy="330.8" r="10.2" fill="#4b9b0c"/><circle cx="1324.2" cy="330.8" r="7.7" fill="#3f6bff"/></svg>
<div class="a" style="left:1041px;top:497px;width:688px;height:509px;border-radius:7px 7px 2px 2px;box-shadow:0 0 0 1px rgba(0,0,0,.85),0 2px 10px rgba(0,0,0,.5);overflow:hidden"><div class="a" style="left:0;top:0;width:688px;height:29px;background:linear-gradient(#2c3032 0,#0c0e0f 4px,#030303 18px,#0a1414 23px,#7fd0d8 27px,#a8e8ee 29px)"></div><div class="a" style="left:0;top:29px;width:7px;height:480px;background:linear-gradient(#0a0a0a,#151515)"></div><div class="a" style="left:681px;top:29px;width:7px;height:480px;background:linear-gradient(#111 0,#0a0a0a 90%,#ddd 100%)"></div><div class="a" style="left:0;top:502px;width:688px;height:7px;background:linear-gradient(90deg,#9adfe6 0,#c8f4f6 60%,#f2ffff 100%)"></div><div class="a" style="left:0;top:0;width:688px;height:509px;border-radius:7px 7px 2px 2px;box-shadow:inset 0 0 0 1px rgba(255,255,255,.6)"></div><div class="a" style="left:6px;top:28px;width:676px;height:475px;box-shadow:0 0 0 1px rgba(255,255,255,.55);border:1px solid rgba(0,0,0,.7)"></div></div>
<div class="a" style="left:1046px;top:501px;width:120px;height:20px;background:rgba(255,255,255,.55);filter:blur(5px);border-radius:10px"></div>
<svg class="a" style="left:1048px;top:504px" width="16" height="16"><use href="#xi"/></svg>
<div class="a ui" style="left:1069px;top:503px;line-height:16px;font-size:12.4px;letter-spacing:.3px">Popview - 2</div>
<div class="a " style="left:1047px;top:524px;width:675px;height:476px;background:#3f8f7c"></div>
<div class="a " style="left:1051px;top:528px;width:631px;height:437px;background:#000"></div>
<div class="a t" style="left:1682px;top:524px;width:40px;height:444px;"></div>
<div class="a " style="left:1682px;top:524px;width:3px;height:444px;background:#b4efe0"></div>
<div class="a " style="left:1686px;top:630px;width:36px;height:36px;background:#000"></div>
<div class="a t upt" style="left:1687px;top:631px;width:34px;height:34px;"></div>
<div class="a c upc" style="left:1691px;top:635px;width:26px;height:26px;"></div>
<svg class="a" style="left:1694px;top:638px" width="20" height="20" fill="none" stroke="#000" stroke-width="1.6"><rect x="-.5" y="-.5" width="21" height="20.5" stroke-width="1.2"/><g transform="translate(2.500 2.500) scale(.75)"></g></svg>
<div class="a " style="left:1686px;top:666px;width:36px;height:36px;background:#000"></div>
<div class="a t upt" style="left:1687px;top:667px;width:34px;height:34px;"></div>
<div class="a c upc" style="left:1691px;top:671px;width:26px;height:26px;"></div>
<svg class="a" style="left:1694px;top:674px" width="20" height="20" fill="none" stroke="#000" stroke-width="1.6"><rect x="-.5" y="-.5" width="21" height="20.5" stroke-width="1.2"/><g transform="translate(2.500 2.500) scale(.75)"><path d="M9 2H2V18H9"/><path d="M6 10H16M12 5l5 5-5 5Z" fill="#000"/></g></svg>
<div class="a " style="left:1686px;top:701px;width:36px;height:36px;background:#000"></div>
<div class="a t upt" style="left:1687px;top:702px;width:34px;height:34px;"></div>
<div class="a c upc" style="left:1691px;top:706px;width:26px;height:26px;"></div>
<svg class="a" style="left:1694px;top:709px" width="20" height="20" fill="none" stroke="#000" stroke-width="1.6"><rect x="-.5" y="-.5" width="21" height="20.5" stroke-width="1.2"/><g transform="translate(2.500 2.500) scale(.75)"><rect x="7" y="7" width="6" height="6"/><path d="M1 1l5 5M19 1l-5 5M1 19l5-5M19 19l-5-5"/><path d="M6 2v4H2ZM14 2v4h4ZM6 18v-4H2ZM14 18v-4h4Z" fill="#000" stroke="none"/></g></svg>
<div class="a " style="left:1686px;top:736px;width:36px;height:36px;background:#000"></div>
<div class="a t upt" style="left:1687px;top:737px;width:34px;height:34px;"></div>
<div class="a c upc" style="left:1691px;top:741px;width:26px;height:26px;"></div>
<svg class="a" style="left:1694px;top:744px" width="20" height="20" fill="none" stroke="#000" stroke-width="1.6"><rect x="-.5" y="-.5" width="21" height="20.5" stroke-width="1.2"/><g transform="translate(2.500 2.500) scale(.75)"><rect x="7" y="7" width="6" height="6"/><path d="M10 0l3 4H7ZM10 20l3-4H7ZM0 10l4-3v6ZM20 10l-4-3v6Z" fill="#000" stroke="none"/></g></svg>
<div class="a t" style="left:1047px;top:966px;width:675px;height:34px;"></div>
<div class="a " style="left:1047px;top:967px;width:675px;height:2px;background:#2f8a72"></div>
<div class="a t upt" style="left:1049px;top:970px;width:672px;height:26px;"></div>
<div class="a c upc" style="left:1052px;top:972px;width:667px;height:21px;font:bold 13px 'Liberation Mono',monospace;line-height:23px;padding-left:310px">Close</div>
<svg class="a" style="left:0;top:0" width="1920" height="1044" viewBox="0 0 1920 1044"><circle cx="1141.5" cy="630.5" r="8.6" fill="#4b9b0c"/><circle cx="1141.5" cy="630.5" r="3" fill="#c8a414"/><circle cx="1267.5" cy="630.5" r="8.6" fill="#4b9b0c"/><circle cx="1267.5" cy="630.5" r="3" fill="#c8a414"/><circle cx="1393.5" cy="630.5" r="8.6" fill="#4b9b0c"/><circle cx="1393.5" cy="630.5" r="3" fill="#c8a414"/><rect x="1394" y="651" width="14.5" height="247" fill="#4b9b0c"/><rect x="1390" y="651" width="22.5" height="24" fill="#4b9b0c"/><rect x="1390" y="697" width="22.5" height="24" fill="#4b9b0c"/><rect x="1390" y="762" width="22.5" height="23" fill="#4b9b0c"/><rect x="1390" y="816" width="22.5" height="23" fill="#4b9b0c"/><rect x="1390" y="874" width="22.5" height="24" fill="#4b9b0c"/><rect x="1439.5" y="651" width="14" height="60" fill="#4b9b0c"/><rect x="1434.5" y="651" width="22.5" height="18" fill="#4b9b0c"/><rect x="1434.5" y="697" width="22.5" height="24" fill="#4b9b0c"/><rect x="1434.5" y="762" width="22.5" height="23" fill="#4b9b0c"/><rect x="1434.5" y="816" width="22.5" height="23" fill="#4b9b0c"/><rect x="1434.5" y="874" width="22.5" height="24" fill="#4b9b0c"/><rect x="1450" y="766" width="30" height="15" fill="#4b9b0c"/><rect x="1450" y="820" width="30" height="15" fill="#4b9b0c"/><rect x="1450" y="878" width="30" height="15" fill="#4b9b0c"/><rect x="1476.5" y="762.5" width="51.5" height="152.5" fill="#4b9b0c"/><rect x="1434.500" y="762.500" width="44" height="25.500" fill="#4b9b0c"/><path d="M1440 660 H1502 L1592.5 750 V965" fill="none" stroke="#4b9b0c" stroke-width="14"/><rect x="1643.5" y="651" width="14" height="314" fill="#4b9b0c"/><path d="M1150 813.5 L1193 770.400 H1300" fill="none" stroke="#4b9b0c" stroke-width="14.6" stroke-linejoin="round"/><path d="M1299 872 L1312.600 885.600 H1395" fill="none" stroke="#4b9b0c" stroke-width="14.4" stroke-linejoin="round"/><circle cx="1305.5" cy="774.5" r="13.4" fill="#4b9b0c"/><circle cx="1305.5" cy="774.5" r="10" fill="#3f6bff"/><circle cx="1299" cy="872" r="13.4" fill="#4b9b0c"/><circle cx="1299" cy="872" r="10" fill="#3f6bff"/><circle cx="1503" cy="775" r="3" fill="#c8a414"/><circle cx="1503" cy="882.5" r="3" fill="#c8a414"/></svg>
<div class="a" style="left:261px;top:21px;width:346px;height:533px;border-radius:7px 7px 2px 2px;box-shadow:0 0 0 1px rgba(0,0,0,.85),0 2px 10px rgba(0,0,0,.5);overflow:hidden"><div class="a" style="left:0;top:0;width:346px;height:29px;background:linear-gradient(#dff8fa 0,#c4eef2 40%,#a9e3e8 100%)"></div><div class="a" style="left:0;top:29px;width:7px;height:504px;background:linear-gradient(90deg,#e8ffff,#7fdcdc)"></div><div class="a" style="left:339px;top:29px;width:7px;height:504px;background:linear-gradient(#a9e3e8 0,#a9e3e8 36px,#16201f 40px,#050505 100%)"></div><div class="a" style="left:0;top:526px;width:346px;height:7px;background:linear-gradient(90deg,#7fe6e6 0,#74dede 70%,#101414 80%,#050505 100%)"></div><div class="a" style="left:0;top:0;width:346px;height:533px;border-radius:7px 7px 2px 2px;box-shadow:inset 0 0 0 1px rgba(255,255,255,.6)"></div><div class="a" style="left:6px;top:28px;width:334px;height:499px;box-shadow:0 0 0 1px rgba(255,255,255,.55);border:1px solid rgba(0,0,0,.7)"></div></div>
<svg class="a" style="left:268px;top:28px" width="16" height="16"><use href="#xi"/></svg>
<div class="a ui" style="left:289px;top:27px;line-height:16px;font-size:12.4px;font-size:12.98px">Features Histogram Popup</div>
<div class="cap" style="left:554px;top:21px;width:48px;background:rgba(255,255,255,.25)"></div>
<svg class="a" style="left:572px;top:25px" width="12" height="10"><use href="#cx2"/></svg>
<div class="a t" style="left:268px;top:49px;width:332px;height:498px;"></div>
<div class="a " style="left:268px;top:49px;width:332px;height:2px;background:#2f8a72"></div>
<div class="a " style="left:268px;top:49px;width:2px;height:498px;background:#2f8a72"></div>
<div class="a " style="left:271px;top:53px;width:326px;height:21px;background:#000"></div>
<div class="a " style="left:274px;top:55px;width:320px;height:17px;background:#fe0000;font:bold 14px 'Liberation Serif',serif;line-height:16px;padding-left:1px;color:#5a0000;white-space:pre;letter-spacing:.9px">Layer :   drl</div>
<div class="a c upc" style="left:269px;top:78px;width:330px;height:25px;"></div>
<div class="a" style="left:283px;top:82px;font:bold 14px 'Liberation Serif',serif;line-height:16px;letter-spacing:.8px;white-space:pre"><span class="u">F</span>ile</div>
<div class="a" style="left:327px;top:82px;font:bold 14px 'Liberation Serif',serif;line-height:16px;letter-spacing:.8px;white-space:pre"><span class="u">E</span>dit</div>
<div class="a t dnt" style="left:269px;top:106px;width:330px;height:358px;"></div>
<div class="a t" style="left:272px;top:110px;width:306px;height:333px;box-shadow:inset 2px 2px 0 #e4fff8,inset -2px -2px 0 #e4fff8,inset 4px 4px 0 #56ccb0"></div>
<div class="a t dnt" style="left:581px;top:110px;width:15px;height:333px;"></div>
<svg class="a" style="left:583px;top:112px" width="11" height="12"><path d="M5.5 1 L10 11 H1 Z" fill="#56ccb0" stroke="#d0fff2" stroke-width="1.2"/><path d="M10 11H1" stroke="#2f8a72" stroke-width="1.2"/></svg>
<svg class="a" style="left:583px;top:429px" width="11" height="12"><path d="M5.5 11 L10 1 H1 Z" fill="#56ccb0" stroke="#2f8a72" stroke-width="1.2"/><path d="M1 1H10" stroke="#d0fff2" stroke-width="1.2"/></svg>
<div class="a t upt" style="left:584px;top:125px;width:9px;height:303px;"></div>
<div class="a t dnt" style="left:272px;top:449px;width:304px;height:13px;"></div>
<svg class="a" style="left:274px;top:450px" width="12" height="11"><path d="M1 5.5 L11 1 V10 Z" fill="#56ccb0" stroke="#d0fff2" stroke-width="1.2"/></svg>
<svg class="a" style="left:562px;top:450px" width="12" height="11"><path d="M11 5.5 L1 1 V10 Z" fill="#56ccb0" stroke="#2f8a72" stroke-width="1.2"/><path d="M1 1 L11 5.5" stroke="#d0fff2" stroke-width="1.2"/></svg>
<div class="a t upt" style="left:287px;top:451px;width:274px;height:9px;"></div>
<div class="a" style="left:281px;top:114px;font:bold 12.8px 'Liberation Serif',serif;line-height:13px;white-space:pre;letter-spacing:1.25px">Total Features = 2195</div>
<div class="a" style="left:281px;top:153px;font:bold 12.8px 'Liberation Serif',serif;line-height:13px;white-space:pre;letter-spacing:1.25px">Pads List</div>
<div class="a" style="left:282px;top:166px;font:bold 12.8px 'Liberation Serif',serif;line-height:13px;white-space:pre;letter-spacing:1.25px"><span style="letter-spacing:2.6px">---------</span></div>
<div class="a" style="left:281px;top:192px;font:bold 12.8px 'Liberation Serif',serif;line-height:13px;white-space:pre;letter-spacing:1.25px">POS</div>
<div class="a" style="left:344px;top:192px;font:bold 12.8px 'Liberation Serif',serif;line-height:13px;white-space:pre;letter-spacing:1.25px">r9.843</div>
<div class="a" style="left:505px;top:192px;font:bold 12.8px 'Liberation Serif',serif;line-height:13px;white-space:pre;letter-spacing:1.25px">1826</div>
<div class="a" style="left:281px;top:205px;font:bold 12.8px 'Liberation Serif',serif;line-height:13px;white-space:pre;letter-spacing:1.25px">POS</div>
<div class="a" style="left:344px;top:205px;font:bold 12.8px 'Liberation Serif',serif;line-height:13px;white-space:pre;letter-spacing:1.25px">r13.78</div>
<div class="a" style="left:505px;top:205px;font:bold 12.8px 'Liberation Serif',serif;line-height:13px;white-space:pre;letter-spacing:1.25px">60</div>
<div class="a" style="left:281px;top:218px;font:bold 12.8px 'Liberation Serif',serif;line-height:13px;white-space:pre;letter-spacing:1.25px">POS</div>
<div class="a" style="left:344px;top:218px;font:bold 12.8px 'Liberation Serif',serif;line-height:13px;white-space:pre;letter-spacing:1.25px"><span style="background:#000;color:#fff">r29.</span>528</div>
<div class="a" style="left:505px;top:218px;font:bold 12.8px 'Liberation Serif',serif;line-height:13px;white-space:pre;letter-spacing:1.25px">288</div>
<div class="a" style="left:281px;top:231px;font:bold 12.8px 'Liberation Serif',serif;line-height:13px;white-space:pre;letter-spacing:1.25px">POS</div>
<div class="a" style="left:344px;top:231px;font:bold 12.8px 'Liberation Serif',serif;line-height:13px;white-space:pre;letter-spacing:1.25px">r35.433</div>
<div class="a" style="left:505px;top:231px;font:bold 12.8px 'Liberation Serif',serif;line-height:13px;white-space:pre;letter-spacing:1.25px">4</div>
<div class="a" style="left:281px;top:244px;font:bold 12.8px 'Liberation Serif',serif;line-height:13px;white-space:pre;letter-spacing:1.25px">POS</div>
<div class="a" style="left:344px;top:244px;font:bold 12.8px 'Liberation Serif',serif;line-height:13px;white-space:pre;letter-spacing:1.25px">r37.402</div>
<div class="a" style="left:505px;top:244px;font:bold 12.8px 'Liberation Serif',serif;line-height:13px;white-space:pre;letter-spacing:1.25px">3</div>
<div class="a" style="left:281px;top:257px;font:bold 12.8px 'Liberation Serif',serif;line-height:13px;white-space:pre;letter-spacing:1.25px">POS</div>
<div class="a" style="left:344px;top:257px;font:bold 12.8px 'Liberation Serif',serif;line-height:13px;white-space:pre;letter-spacing:1.25px">r39.37</div>
<div class="a" style="left:505px;top:257px;font:bold 12.8px 'Liberation Serif',serif;line-height:13px;white-space:pre;letter-spacing:1.25px">5</div>
<div class="a" style="left:281px;top:270px;font:bold 12.8px 'Liberation Serif',serif;line-height:13px;white-space:pre;letter-spacing:1.25px">POS</div>
<div class="a" style="left:344px;top:270px;font:bold 12.8px 'Liberation Serif',serif;line-height:13px;white-space:pre;letter-spacing:1.25px">r94.488</div>
<div class="a" style="left:505px;top:270px;font:bold 12.8px 'Liberation Serif',serif;line-height:13px;white-space:pre;letter-spacing:1.25px">2</div>
<div class="a" style="left:281px;top:283px;font:bold 12.8px 'Liberation Serif',serif;line-height:13px;white-space:pre;letter-spacing:1.25px">POS</div>
<div class="a" style="left:344px;top:283px;font:bold 12.8px 'Liberation Serif',serif;line-height:13px;white-space:pre;letter-spacing:1.25px">r125.984</div>
<div class="a" style="left:505px;top:283px;font:bold 12.8px 'Liberation Serif',serif;line-height:13px;white-space:pre;letter-spacing:1.25px">3</div>
<div class="a" style="left:281px;top:296px;font:bold 12.8px 'Liberation Serif',serif;line-height:13px;white-space:pre;letter-spacing:1.25px">POS</div>
<div class="a" style="left:344px;top:296px;font:bold 12.8px 'Liberation Serif',serif;line-height:13px;white-space:pre;letter-spacing:1.25px">r165.354</div>
<div class="a" style="left:505px;top:296px;font:bold 12.8px 'Liberation Serif',serif;line-height:13px;white-space:pre;letter-spacing:1.25px">4</div>
<div class="a" style="left:282px;top:309px;font:bold 12.8px 'Liberation Serif',serif;line-height:13px;white-space:pre;letter-spacing:1.25px;letter-spacing:.9px">----------------------------------------------------</div>
<div class="a" style="left:344px;top:322px;font:bold 12.8px 'Liberation Serif',serif;line-height:13px;white-space:pre;letter-spacing:1.25px">Total</div>
<div class="a" style="left:505px;top:322px;font:bold 12.8px 'Liberation Serif',serif;line-height:13px;white-space:pre;letter-spacing:1.25px">2195</div>
<div class="a " style="left:268px;top:466px;width:332px;height:81px;background:#000"></div>
<div class="a t upt" style="left:270px;top:468px;width:107px;height:25px;"></div>
<div class="a t upt" style="left:379px;top:468px;width:108px;height:25px;"></div>
<div class="a t upt" style="left:489px;top:468px;width:110px;height:52px;"></div>
<div class="a t upt" style="left:270px;top:495px;width:107px;height:25px;"></div>
<div class="a t upt" style="left:379px;top:495px;width:108px;height:25px;"></div>
<div class="a t upt" style="left:270px;top:522px;width:329px;height:25px;"></div>
<div class="a " style="left:272px;top:471px;width:103px;height:19px;background:#fdc24c;box-shadow:inset 2px 2px 0 #ffe6a8,inset -2px -2px 0 #a87c22;font:bold 13px 'Liberation Mono',monospace;line-height:18px;text-align:center;letter-spacing:-.3px">Select</div>
<div class="a " style="left:272px;top:498px;width:103px;height:19px;background:#fdc24c;box-shadow:inset 2px 2px 0 #ffe6a8,inset -2px -2px 0 #a87c22;font:bold 13px 'Liberation Mono',monospace;line-height:18px;text-align:center;letter-spacing:-.3px">Unselect</div>
<div class="a " style="left:381px;top:471px;width:103px;height:19px;background:#fff;box-shadow:inset 2px 2px 0 #fff,inset -2px -2px 0 #aaa;font:bold 13px 'Liberation Mono',monospace;line-height:18px;text-align:center;letter-spacing:-.3px">Highlight</div>
<div class="a " style="left:381px;top:498px;width:103px;height:19px;background:#fff;box-shadow:inset 2px 2px 0 #fff,inset -2px -2px 0 #aaa;font:bold 13px 'Liberation Mono',monospace;line-height:18px;text-align:center;letter-spacing:-.3px">Turn Off</div>
<div class="a c upc" style="left:491px;top:471px;width:106px;height:46px;font:bold 13px 'Liberation Mono',monospace;line-height:18px;text-align:center;letter-spacing:-.3px;line-height:44px">Update</div>
<div class="a c upc" style="left:272px;top:525px;width:325px;height:19px;font:bold 13px 'Liberation Mono',monospace;line-height:18px;text-align:center;letter-spacing:-.3px;line-height:18px">Close</div>
<div class="a" style="left:1442px;top:79px;width:476px;height:573px;border-radius:7px 7px 2px 2px;box-shadow:0 0 0 1px rgba(0,0,0,.85),0 2px 10px rgba(0,0,0,.5);overflow:hidden"><div class="a" style="left:0;top:0;width:476px;height:29px;background:linear-gradient(rgba(255,255,255,.22) 0,rgba(255,255,255,.05) 3px,rgba(0,0,0,0) 50%),linear-gradient(90deg,#14181a 0,#0c0e0f 134px,#3f8a0c 141px,#4b9b0c 146px,#4b9b0c 151px,#2a4a14 156px,#0c1010 160px,#0c1010 166px,#6fb4c4 173px,#9fdde2 182px,#86c4d4 196px,#9adce0 206px,#3a5a5e 214px,#060808 220px,#050505 318px,#5f8a8c 330px,#8fc4c8 345px,#9fd4d8 100%)"></div><div class="a" style="left:0;top:29px;width:7px;height:544px;background:linear-gradient(#0a0a0a,#111)"></div><div class="a" style="left:469px;top:29px;width:7px;height:544px;background:linear-gradient(90deg,#333,#9ab 50%,#ccd)"></div><div class="a" style="left:0;top:566px;width:476px;height:7px;background:linear-gradient(90deg,#0a0a0a 0,#0a0a0a 48%,#9adfe6 52%,#58c8b8 58%,#101010 62%,#050505 100%)"></div><div class="a" style="left:0;top:0;width:476px;height:573px;border-radius:7px 7px 2px 2px;box-shadow:inset 0 0 0 1px rgba(255,255,255,.6)"></div><div class="a" style="left:6px;top:28px;width:464px;height:539px;box-shadow:0 0 0 1px rgba(255,255,255,.55);border:1px solid rgba(0,0,0,.7)"></div></div>
<div class="cap" style="left:1865px;top:79px;width:48px;background:linear-gradient(rgba(255,255,255,.5),rgba(255,255,255,.2) 45%,rgba(120,160,165,.25) 50%,rgba(255,255,255,.2))"></div>
<svg class="a" style="left:1883px;top:83px" width="12" height="10"><use href="#cx2"/></svg>
<div class="a" style="left:1447px;top:83px;width:122px;height:22px;background:rgba(255,255,255,.5);filter:blur(5px);border-radius:10px"></div>
<svg class="a" style="left:1449px;top:86px" width="16" height="16"><use href="#xi"/></svg>
<div class="a ui" style="left:1470px;top:85px;line-height:16px;font-size:12.4px;letter-spacing:.2px">Results histogram</div>
<div class="a t" style="left:1449px;top:107px;width:462px;height:539px;"></div>
<div class="a " style="left:1449px;top:107px;width:462px;height:2px;background:#1e5e50"></div>
<div class="a " style="left:1449px;top:107px;width:2px;height:539px;background:#1e5e50"></div>
<div class="a " style="left:1454px;top:112px;width:103px;height:138px;background:#000"></div>
<div class="a c" style="left:1456px;top:114px;width:99px;height:134px;"></div>
<svg class="a" style="left:1459px;top:120px" width="16" height="16"><path d="M8 1 L15 8 L8 15 L1 8 Z" fill="#9fdbdb"/><path d="M1 8 L8 1 L15 8" fill="none" stroke="#e4fbfb" stroke-width="1.6"/><path d="M1 8 L8 15 L15 8" fill="none" stroke="#4a8080" stroke-width="1.6"/></svg>
<div class="a" style="left:1478px;top:119px;font:bold 14.5px 'Liberation Mono',monospace;line-height:16px;white-space:pre">Count</div>
<svg class="a" style="left:1459px;top:147px" width="16" height="16"><path d="M8 1 L15 8 L8 15 L1 8 Z" fill="#9fdbdb"/><path d="M1 8 L8 1 L15 8" fill="none" stroke="#e4fbfb" stroke-width="1.6"/><path d="M1 8 L8 15 L15 8" fill="none" stroke="#4a8080" stroke-width="1.6"/></svg>
<div class="a" style="left:1478px;top:146px;font:bold 14.5px 'Liberation Mono',monospace;line-height:16px;white-space:pre">Average</div>
<svg class="a" style="left:1459px;top:174px" width="16" height="16"><path d="M8 1 L15 8 L8 15 L1 8 Z" fill="#9fdbdb"/><path d="M1 8 L8 1 L15 8" fill="none" stroke="#e4fbfb" stroke-width="1.6"/><path d="M1 8 L8 15 L15 8" fill="none" stroke="#4a8080" stroke-width="1.6"/></svg>
<div class="a" style="left:1478px;top:173px;font:bold 14.5px 'Liberation Mono',monospace;line-height:16px;white-space:pre">Sum</div>
<svg class="a" style="left:1459px;top:201px" width="16" height="16"><path d="M8 1 L15 8 L8 15 L1 8 Z" fill="#d81b50"/><path d="M1 8 L8 1 L15 8" fill="none" stroke="#5c9d9d" stroke-width="1.6"/><path d="M1 8 L8 15 L15 8" fill="none" stroke="#e4fbfb" stroke-width="1.6"/></svg>
<div class="a" style="left:1478px;top:200px;font:bold 14.5px 'Liberation Mono',monospace;line-height:16px;white-space:pre">Min</div>
<svg class="a" style="left:1459px;top:228px" width="16" height="16"><path d="M8 1 L15 8 L8 15 L1 8 Z" fill="#9fdbdb"/><path d="M1 8 L8 1 L15 8" fill="none" stroke="#e4fbfb" stroke-width="1.6"/><path d="M1 8 L8 15 L15 8" fill="none" stroke="#4a8080" stroke-width="1.6"/></svg>
<div class="a" style="left:1478px;top:227px;font:bold 14.5px 'Liberation Mono',monospace;line-height:16px;white-space:pre">Max</div>
<div class="a c" style="left:1454px;top:250px;width:103px;height:150px;border-right:2px solid #000;border-left:2px solid #000"></div>
<div class="a c" style="left:1456px;top:251px;width:81px;height:113px;box-shadow:inset 1px 1px 0 #5c9d9d,inset -2px -2px 0 #dcf7f7"></div>
<div class="a " style="left:1459px;top:255px;width:72px;height:15px;background:#000;color:#9fdbdb;font:15px 'Liberation Mono',monospace;line-height:14px;overflow:hidden">Ring</div>
<div class="a c dnc" style="left:1541px;top:251px;width:13px;height:113px;"></div>
<svg class="a" style="left:1542px;top:252px" width="11" height="12"><path d="M5.5 1 L10 11 H1 Z" fill="#9fdbdb" stroke="#e4fbfb" stroke-width="1.2"/><path d="M10 11H1" stroke="#5c9d9d" stroke-width="1.2"/></svg>
<svg class="a" style="left:1542px;top:351px" width="11" height="12"><path d="M5.5 11 L10 1 H1 Z" fill="#9fdbdb" stroke="#5c9d9d" stroke-width="1.2"/><path d="M1 1H10" stroke="#e4fbfb" stroke-width="1.2"/></svg>
<div class="a c upc" style="left:1543px;top:265px;width:9px;height:85px;"></div>
<div class="a c" style="left:1456px;top:368px;width:29px;height:29px;box-shadow:inset 2px 2px 0 #d4f5f0,inset -2px -2px 0 #3f8f88"></div>
<div class="a" style="left:1460px;top:372.0px;width:21px;height:21px;border:1px solid #000;font:9.8px 'Liberation Serif',serif;line-height:9px;text-align:center;letter-spacing:-.2px">DEL</div>
<div class="a" style="left:1467.0px;top:383.0px;width:7px;height:7px;border-radius:50%;background:#f01818;box-shadow:0 0 0 .7px #000"></div>
<div class="a c" style="left:1490px;top:368px;width:29px;height:29px;box-shadow:inset 2px 2px 0 #d4f5f0,inset -2px -2px 0 #3f8f88"></div>
<div class="a" style="left:1494px;top:372.0px;width:21px;height:21px;border:1px solid #000;font:9.8px 'Liberation Serif',serif;line-height:9px;text-align:center;letter-spacing:-.2px">REF</div>
<div class="a" style="left:1501.0px;top:383.0px;width:7px;height:7px;border-radius:50%;background:#1fe01f;box-shadow:0 0 0 .7px #000"></div>
<div class="a " style="left:1558px;top:112px;width:349px;height:223px;background:#000"></div>
<div class="a c" style="left:1560px;top:114px;width:345px;height:219px;"></div>
<div class="a " style="left:1630px;top:117px;width:205px;height:22px;background:#cffcfc;box-shadow:inset 1px 1px 0 #fff,inset -1px -1px 0 #000,1px 1px 0 #000;font:italic bold 14.5px 'Liberation Mono',monospace;line-height:22px;text-align:center;white-space:pre;letter-spacing:-.1px">Size(Ring) / Min(Ring)</div>
<div class="a " style="left:1564.5px;top:219px;width:56px;height:60px;background:#ff1a1a;border:1px solid #000;border-bottom:none"></div>
<div class="a" style="left:1564.5px;top:202px;width:55px;text-align:center;font:bold 14.5px 'Liberation Mono',monospace;line-height:16px;color:#000;letter-spacing:.2px">4.826</div>
<div class="a " style="left:1564.5px;top:284px;width:56px;height:28px;background:#ff1a1a;border:1px solid #000;overflow:hidden;font:bold 14.5px 'Liberation Mono',monospace;line-height:14.5px;text-align:center;white-space:pre;padding-top:2px">4.8-<br> 4.9</div>
<div class="a " style="left:1619.5px;top:205.5px;width:56px;height:73.5px;background:#ff1a1a;border:1px solid #000;border-bottom:none"></div>
<div class="a" style="left:1619.5px;top:188.5px;width:55px;text-align:center;font:bold 14.5px 'Liberation Mono',monospace;line-height:16px;color:#e01010;letter-spacing:.2px">5.836</div>
<div class="a " style="left:1619.5px;top:284px;width:56px;height:28px;background:#ff1a1a;border:1px solid #000;overflow:hidden;font:bold 14.5px 'Liberation Mono',monospace;line-height:14.5px;text-align:center;white-space:pre;padding-top:2px">5.8-<br> 5.9</div>
<div class="a " style="left:1674.5px;top:203.5px;width:56px;height:75.5px;background:#ff1a1a;border:1px solid #000;border-bottom:none"></div>
<div class="a" style="left:1674.5px;top:186.5px;width:55px;text-align:center;font:bold 14.5px 'Liberation Mono',monospace;line-height:16px;color:#000;letter-spacing:.2px">5.966</div>
<div class="a " style="left:1674.5px;top:284px;width:56px;height:28px;background:#ff1a1a;border:1px solid #000;overflow:hidden;font:bold 14.5px 'Liberation Mono',monospace;line-height:14.5px;text-align:center;white-space:pre;padding-top:2px">5.9-<br> 6</div>
<div class="a " style="left:1729.5px;top:195.5px;width:56px;height:83.5px;background:#ffff1f;border:1px solid #000;border-bottom:none"></div>
<div class="a" style="left:1729.5px;top:178.5px;width:55px;text-align:center;font:bold 14.5px 'Liberation Mono',monospace;line-height:16px;color:#000;letter-spacing:.2px">6.566</div>
<div class="a " style="left:1729.5px;top:284px;width:56px;height:28px;background:#ffff1f;border:1px solid #000;overflow:hidden;font:bold 14.5px 'Liberation Mono',monospace;line-height:14.5px;text-align:center;white-space:pre;padding-top:2px">6.5-<br> 6.6</div>
<div class="a " style="left:1784.5px;top:194.5px;width:56px;height:84.5px;background:#ffff1f;border:1px solid #000;border-bottom:none"></div>
<div class="a" style="left:1784.5px;top:177.5px;width:55px;text-align:center;font:bold 14.5px 'Liberation Mono',monospace;line-height:16px;color:#000;letter-spacing:.2px">6.679</div>
<div class="a " style="left:1784.5px;top:284px;width:56px;height:28px;background:#ffff1f;border:1px solid #000;overflow:hidden;font:bold 14.5px 'Liberation Mono',monospace;line-height:14.5px;text-align:center;white-space:pre;padding-top:2px">6.6-<br> 6.7</div>
<div class="a " style="left:1839.5px;top:189px;width:56px;height:90px;background:#ffff1f;border:1px solid #000;border-bottom:none"></div>
<div class="a" style="left:1839.5px;top:172px;width:55px;text-align:center;font:bold 14.5px 'Liberation Mono',monospace;line-height:16px;color:#000;letter-spacing:.2px">7.103</div>
<div class="a " style="left:1839.5px;top:284px;width:56px;height:28px;background:#ffff1f;border:1px solid #000;overflow:hidden;font:bold 14.5px 'Liberation Mono',monospace;line-height:14.5px;text-align:center;white-space:pre;padding-top:2px">7.1-<br> 7.2</div>
<div class="a " style="left:1560px;top:278px;width:345px;height:4px;background:#000"></div>
<div class="a " style="left:1561px;top:320px;width:344px;height:13px;background:#86bcbc;box-shadow:inset 1px 1px 0 #5c9d9d,inset -1px -1px 0 #dcf7f7"></div>
<svg class="a" style="left:1562px;top:321px" width="12" height="11"><path d="M1 5.5 L11 1 V10 Z" fill="#9fdbdb" stroke="#e4fbfb" stroke-width="1.2"/></svg>
<svg class="a" style="left:1892px;top:321px" width="12" height="11"><path d="M11 5.5 L1 1 V10 Z" fill="#9fdbdb" stroke="#5c9d9d" stroke-width="1.2"/><path d="M1 1 L11 5.5" stroke="#e4fbfb" stroke-width="1.2"/></svg>
<div class="a c upc" style="left:1575px;top:322px;width:184px;height:10px;"></div>
<div class="a " style="left:1558px;top:334px;width:349px;height:65px;background:#000"></div>
<div class="a c" style="left:1560px;top:336px;width:94px;height:60px;"></div>
<div class="a c" style="left:1561px;top:337px;width:73px;height:58px;box-shadow:inset 1px 1px 0 #5c9d9d,inset -2px -2px 0 #dcf7f7"></div>
<div class="a " style="left:1563px;top:340px;width:66px;height:15px;background:#000;color:#9fdbdb;font:bold 14.5px 'Liberation Mono',monospace;line-height:14px;overflow:hidden">Ring</div>
<div class="a" style="left:1563px;top:358px;font:bold 14.5px 'Liberation Mono',monospace;line-height:18px;white-space:pre">Hole<br>Feature</div>
<div class="a c dnc" style="left:1638px;top:337px;width:13px;height:58px;"></div>
<svg class="a" style="left:1639px;top:338px" width="11" height="12"><path d="M5.5 1 L10 11 H1 Z" fill="#9fdbdb" stroke="#e4fbfb" stroke-width="1.2"/><path d="M10 11H1" stroke="#5c9d9d" stroke-width="1.2"/></svg>
<svg class="a" style="left:1639px;top:382px" width="11" height="12"><path d="M5.5 11 L10 1 H1 Z" fill="#9fdbdb" stroke="#5c9d9d" stroke-width="1.2"/><path d="M1 1H10" stroke="#e4fbfb" stroke-width="1.2"/></svg>
<div class="a c upc" style="left:1640px;top:351px;width:9px;height:30px;"></div>
<div class="a c" style="left:1655px;top:336px;width:249px;height:60px;"></div>
<div class="a" style="left:1655px;top:337px;width:247px;text-align:center;font:bold 14.5px 'Liberation Mono',monospace;line-height:17px">Resolution</div>
<div class="a" style="left:1659px;top:360px;font:14.5px 'Liberation Mono',monospace;line-height:17px;letter-spacing:.6px">0.1</div>
<div class="a " style="left:1657px;top:379px;width:245px;height:13px;background:#86bcbc;box-shadow:inset 1px 1px 0 #5c9d9d,inset -1px -1px 0 #dcf7f7"></div>
<div class="a c upc" style="left:1659px;top:381px;width:27px;height:9px;"></div>
<div class="a " style="left:1672px;top:381px;width:1px;height:9px;background:#5c9d9d"></div>
<div class="a " style="left:1451px;top:403px;width:458px;height:2px;background:#2f8a72"></div>
<div class="a " style="left:1451px;top:405px;width:458px;height:1px;background:#b4efe0"></div>
<div class="a t upt" style="left:1892px;top:400px;width:9px;height:9px;"></div>
<div class="a " style="left:1452px;top:409px;width:456px;height:164px;background:#000"></div>
<div class="a t" style="left:1454px;top:411px;width:452px;height:160px;"></div>
<svg class="a" style="left:1570px;top:426px" width="233" height="130"><rect x=".5" y=".5" width="231" height="128" fill="none" stroke="#c01a8a" stroke-width="1" stroke-dasharray="4 3"/></svg>
<div class="a c" style="left:1626px;top:430px;width:109px;height:122px;border:2px solid #000"></div>
<svg class="a" style="left:0;top:0" width="1920" height="1044"><rect x="1643.0" y="458.0" width="3.6" height="3.4" fill="#e81ce8"/><rect x="1655.1" y="458.0" width="3.6" height="3.4" fill="#e81ce8"/><rect x="1667.2" y="458.0" width="3.6" height="3.4" fill="#e81ce8"/><rect x="1679.3" y="458.0" width="3.6" height="3.4" fill="#e81ce8"/><rect x="1691.4" y="458.0" width="3.6" height="3.4" fill="#e81ce8"/><rect x="1703.5" y="458.0" width="3.6" height="3.4" fill="#e81ce8"/><rect x="1715.6" y="458.0" width="3.6" height="3.4" fill="#e81ce8"/><rect x="1727.7" y="458.0" width="3.6" height="3.4" fill="#e81ce8"/><rect x="1643.0" y="465.2" width="3.6" height="3.4" fill="#e81ce8"/><rect x="1655.1" y="465.2" width="3.6" height="3.4" fill="#e81ce8"/><rect x="1667.2" y="465.2" width="3.6" height="3.4" fill="#e81ce8"/><rect x="1679.3" y="465.2" width="3.6" height="3.4" fill="#e81ce8"/><rect x="1691.4" y="465.2" width="3.6" height="3.4" fill="#e81ce8"/><rect x="1703.5" y="465.2" width="3.6" height="3.4" fill="#e81ce8"/><rect x="1715.6" y="465.2" width="3.6" height="3.4" fill="#e81ce8"/><rect x="1727.7" y="465.2" width="3.6" height="3.4" fill="#e81ce8"/><rect x="1643.0" y="472.4" width="3.6" height="3.4" fill="#e81ce8"/><rect x="1655.1" y="472.4" width="3.6" height="3.4" fill="#e81ce8"/><rect x="1667.2" y="472.4" width="3.6" height="3.4" fill="#e81ce8"/><rect x="1679.3" y="472.4" width="3.6" height="3.4" fill="#e81ce8"/><rect x="1691.4" y="472.4" width="3.6" height="3.4" fill="#e81ce8"/><rect x="1703.5" y="472.4" width="3.6" height="3.4" fill="#e81ce8"/><rect x="1715.6" y="472.4" width="3.6" height="3.4" fill="#e81ce8"/><rect x="1727.7" y="472.4" width="3.6" height="3.4" fill="#e81ce8"/><rect x="1643.0" y="479.6" width="3.6" height="3.4" fill="#e81ce8"/><rect x="1655.1" y="479.6" width="3.6" height="3.4" fill="#e81ce8"/><rect x="1667.2" y="479.6" width="3.6" height="3.4" fill="#e81ce8"/><rect x="1679.3" y="479.6" width="3.6" height="3.4" fill="#e81ce8"/><rect x="1691.4" y="479.6" width="3.6" height="3.4" fill="#e81ce8"/><rect x="1703.5" y="479.6" width="3.6" height="3.4" fill="#e81ce8"/><rect x="1715.6" y="479.6" width="3.6" height="3.4" fill="#e81ce8"/><rect x="1727.7" y="479.6" width="3.6" height="3.4" fill="#e81ce8"/><rect x="1643.0" y="486.8" width="3.6" height="3.4" fill="#e81ce8"/><rect x="1655.1" y="486.8" width="3.6" height="3.4" fill="#e81ce8"/><rect x="1667.2" y="486.8" width="3.6" height="3.4" fill="#e81ce8"/><rect x="1679.3" y="486.8" width="3.6" height="3.4" fill="#e81ce8"/><rect x="1691.4" y="486.8" width="3.6" height="3.4" fill="#e81ce8"/><rect x="1703.5" y="486.8" width="3.6" height="3.4" fill="#e81ce8"/><rect x="1715.6" y="486.8" width="3.6" height="3.4" fill="#e81ce8"/><rect x="1727.7" y="486.8" width="3.6" height="3.4" fill="#e81ce8"/><rect x="1643.0" y="494.0" width="3.6" height="3.4" fill="#e81ce8"/><rect x="1655.1" y="494.0" width="3.6" height="3.4" fill="#e81ce8"/><rect x="1667.2" y="494.0" width="3.6" height="3.4" fill="#e81ce8"/><rect x="1679.3" y="494.0" width="3.6" height="3.4" fill="#e81ce8"/><rect x="1691.4" y="494.0" width="3.6" height="3.4" fill="#e81ce8"/><rect x="1703.5" y="494.0" width="3.6" height="3.4" fill="#e81ce8"/><rect x="1715.6" y="494.0" width="3.6" height="3.4" fill="#e81ce8"/><rect x="1727.7" y="494.0" width="3.6" height="3.4" fill="#e81ce8"/><rect x="1643.0" y="501.2" width="3.6" height="3.4" fill="#e81ce8"/><rect x="1655.1" y="501.2" width="3.6" height="3.4" fill="#e81ce8"/><rect x="1667.2" y="501.2" width="3.6" height="3.4" fill="#e81ce8"/><rect x="1679.3" y="501.2" width="3.6" height="3.4" fill="#e81ce8"/><rect x="1691.4" y="501.2" width="3.6" height="3.4" fill="#e81ce8"/><rect x="1703.5" y="501.2" width="3.6" height="3.4" fill="#e81ce8"/><rect x="1715.6" y="501.2" width="3.6" height="3.4" fill="#e81ce8"/><rect x="1727.7" y="501.2" width="3.6" height="3.4" fill="#e81ce8"/><rect x="1643.0" y="508.4" width="3.6" height="3.4" fill="#e81ce8"/><rect x="1655.1" y="508.4" width="3.6" height="3.4" fill="#e81ce8"/><rect x="1667.2" y="508.4" width="3.6" height="3.4" fill="#e81ce8"/><rect x="1679.3" y="508.4" width="3.6" height="3.4" fill="#e81ce8"/><rect x="1691.4" y="508.4" width="3.6" height="3.4" fill="#e81ce8"/><rect x="1703.5" y="508.4" width="3.6" height="3.4" fill="#e81ce8"/><rect x="1715.6" y="508.4" width="3.6" height="3.4" fill="#e81ce8"/><rect x="1727.7" y="508.4" width="3.6" height="3.4" fill="#e81ce8"/><rect x="1643.0" y="515.6" width="3.6" height="3.4" fill="#e81ce8"/><rect x="1655.1" y="515.6" width="3.6" height="3.4" fill="#e81ce8"/><rect x="1667.2" y="515.6" width="3.6" height="3.4" fill="#e81ce8"/><rect x="1679.3" y="515.6" width="3.6" height="3.4" fill="#e81ce8"/><rect x="1691.4" y="515.6" width="3.6" height="3.4" fill="#e81ce8"/><rect x="1703.5" y="515.6" width="3.6" height="3.4" fill="#e81ce8"/><rect x="1715.6" y="515.6" width="3.6" height="3.4" fill="#e81ce8"/><rect x="1727.7" y="515.6" width="3.6" height="3.4" fill="#e81ce8"/><rect x="1643.0" y="522.8" width="3.6" height="3.4" fill="#e81ce8"/><rect x="1655.1" y="522.8" width="3.6" height="3.4" fill="#e81ce8"/><rect x="1667.2" y="522.8" width="3.6" height="3.4" fill="#e81ce8"/><rect x="1679.3" y="522.8" width="3.6" height="3.4" fill="#e81ce8"/><rect x="1691.4" y="522.8" width="3.6" height="3.4" fill="#e81ce8"/><rect x="1703.5" y="522.8" width="3.6" height="3.4" fill="#e81ce8"/><rect x="1715.6" y="522.8" width="3.6" height="3.4" fill="#e81ce8"/><rect x="1727.7" y="522.8" width="3.6" height="3.4" fill="#e81ce8"/><rect x="1643.0" y="530.0" width="3.6" height="3.4" fill="#e81ce8"/><rect x="1655.1" y="530.0" width="3.6" height="3.4" fill="#e81ce8"/><rect x="1667.2" y="530.0" width="3.6" height="3.4" fill="#e81ce8"/><rect x="1679.3" y="530.0" width="3.6" height="3.4" fill="#e81ce8"/><rect x="1691.4" y="530.0" width="3.6" height="3.4" fill="#e81ce8"/><rect x="1703.5" y="530.0" width="3.6" height="3.4" fill="#e81ce8"/><rect x="1715.6" y="530.0" width="3.6" height="3.4" fill="#e81ce8"/><rect x="1727.7" y="530.0" width="3.6" height="3.4" fill="#e81ce8"/><rect x="1643.0" y="537.2" width="3.6" height="3.4" fill="#e81ce8"/><rect x="1655.1" y="537.2" width="3.6" height="3.4" fill="#e81ce8"/><rect x="1667.2" y="537.2" width="3.6" height="3.4" fill="#e81ce8"/><rect x="1679.3" y="537.2" width="3.6" height="3.4" fill="#e81ce8"/><rect x="1691.4" y="537.2" width="3.6" height="3.4" fill="#e81ce8"/><rect x="1703.5" y="537.2" width="3.6" height="3.4" fill="#e81ce8"/><rect x="1715.6" y="537.2" width="3.6" height="3.4" fill="#e81ce8"/><rect x="1727.7" y="537.2" width="3.6" height="3.4" fill="#e81ce8"/></svg>
<div class="a c" style="left:1456px;top:577px;width:29px;height:37px;box-shadow:inset 2px 2px 0 #d4f5f0,inset -2px -2px 0 #3f8f88"></div>
<div class="a" style="left:1460px;top:585.0px;width:21px;height:21px;border:1px solid #000;font:9.8px 'Liberation Serif',serif;line-height:9px;text-align:center;letter-spacing:-.2px">DEL</div>
<div class="a" style="left:1467.0px;top:596.0px;width:7px;height:7px;border-radius:50%;background:#f01818;box-shadow:0 0 0 .7px #000"></div>
<div class="a c" style="left:1490px;top:577px;width:29px;height:37px;box-shadow:inset 2px 2px 0 #d4f5f0,inset -2px -2px 0 #3f8f88"></div>
<div class="a" style="left:1494px;top:585.0px;width:21px;height:21px;border:1px solid #000;font:9.8px 'Liberation Serif',serif;line-height:9px;text-align:center;letter-spacing:-.2px">REF</div>
<div class="a" style="left:1501.0px;top:596.0px;width:7px;height:7px;border-radius:50%;background:#1fe01f;box-shadow:0 0 0 .7px #000"></div>
<div class="a " style="left:1521px;top:576px;width:303px;height:39px;background:#000"></div>
<div class="a c" style="left:1522px;top:577px;width:301px;height:37px;font:bold 14.5px 'Liberation Mono',monospace;line-height:36px;padding-left:2px;white-space:pre;letter-spacing:.35px">2600 measurements for 2 layers</div>
<div class="a t upt" style="left:1828px;top:577px;width:36px;height:37px;"></div>
<div class="a c upc" style="left:1831px;top:580px;width:30px;height:31px;"></div>
<svg class="a" style="left:1833px;top:583px" width="26" height="26" fill="none"><rect x="1.5" y="1.5" width="11" height="11" stroke="#1a1ab8" stroke-width="2.4" fill="#e8e8ff"/><path d="M4 11V6h2v2h2V5h2v6Z" fill="#e01818"/><rect x="17" y="17" width="7" height="7" stroke="#1a1ab8" stroke-width="2"/><path d="M14 6h7v8" stroke="#000" stroke-width="1.3"/><path d="M18.500 13l2.500 3 2.500-3Z" fill="#000"/></svg>
<div class="a t upt" style="left:1870px;top:577px;width:36px;height:37px;"></div>
<div class="a c upc" style="left:1873px;top:580px;width:30px;height:31px;"></div>
<svg class="a" style="left:1875px;top:583px" width="26" height="26" fill="none"><rect x="1.5" y="1.5" width="11" height="11" stroke="#1a1ab8" stroke-width="2.4" fill="#e8e8ff"/><path d="M4 11V6h2v2h2V5h2v6Z" fill="#e01818"/><rect x="17" y="17" width="7" height="7" stroke="#1a1ab8" stroke-width="2"/><path d="M14 6h7v8" stroke="#000" stroke-width="1.3"/><path d="M18.500 13l2.500 3 2.500-3Z" fill="#000"/></svg>
<div class="a t" style="left:1449px;top:620px;width:462px;height:28px;"></div>
<div class="a " style="left:1449px;top:618px;width:462px;height:2px;background:#000"></div>
<div class="a c" style="left:1450px;top:621px;width:460px;height:25px;box-shadow:inset 3px 3px 0 #d8f6f6,inset -3px -3px 0 #4f9494;font:bold 13px 'Liberation Mono',monospace;line-height:24px;text-align:center">Close</div>
<div class="a" style="left:152px;top:745px;width:1004px;height:310px;border-radius:7px 7px 0 0;box-shadow:0 0 0 1px rgba(0,0,0,.85),0 0 12px rgba(0,0,0,.6);overflow:hidden"><div class="a" style="left:0;top:0;width:1004px;height:30px;background:linear-gradient(90deg,#66cdb9 0,#5cc6b3 180px,#57b9ab 290px,#3d8a86 345px,#1c3a3a 362px,#070909 375px,#050505 100%)"></div><div class="a" style="left:0;top:0;width:370px;height:30px;background:linear-gradient(rgba(255,255,255,.35),rgba(255,255,255,.05) 50%,rgba(0,0,0,.08))"></div><div class="a" style="left:0;top:30px;width:7px;height:280px;background:linear-gradient(90deg,#8ed8d0,#6db8c0 60%,#cfe0ee)"></div><div class="a" style="left:997px;top:30px;width:7px;height:280px;background:linear-gradient(90deg,#99a,#222 40%,#0a0a0a)"></div><div class="a" style="left:0;top:0;width:1004px;height:310px;border-radius:7px 7px 0 0;box-shadow:inset 0 0 0 1px rgba(255,255,255,.55)"></div></div>
<div class="a" style="left:480px;top:748px;width:350px;height:24px;background:rgba(235,240,240,.5);filter:blur(7px);border-radius:12px"></div>
<div class="a ui" style="left:497px;top:751px;line-height:17px;font-size:12.6px;letter-spacing:.1px;text-shadow:0 0 4px #fff,0 0 7px #fff,0 0 10px #fff">4V2X702MA0-预审指示.xls  [兼容模式] - Microsoft Excel</div>
<div class="a" style="left:1048px;top:745px;width:102px;height:19px;border:1px solid rgba(255,255,255,.6);border-top:none;border-radius:0 0 5px 5px;box-shadow:0 0 0 1px rgba(0,0,0,.7);background:linear-gradient(90deg,transparent 0,transparent 55px,#c8402c 55px,#c8402c 100%),linear-gradient(#5a6064,#2a2d2f 45%,#0c0d0e 50%,#1a1d1f)"></div>
<div class="a" style="left:1104px;top:746px;width:44px;height:17px;border-radius:0 0 4px 0;background:linear-gradient(#e8a090,#d05a44 45%,#b82810 50%,#d0503a)"></div>
<div class="a" style="left:1075px;top:745px;width:1px;height:18px;background:rgba(255,255,255,.5)"></div><div class="a" style="left:1102px;top:745px;width:1px;height:18px;background:rgba(255,255,255,.5)"></div>
<div class="a" style="left:1056px;top:755px;width:11px;height:4px;background:#fff;box-shadow:0 0 0 1px #444"></div>
<div class="a" style="left:1083px;top:750px;width:11px;height:9px;border:2.5px solid #fff;box-shadow:0 0 0 1px #444,inset 0 0 0 1px #444"></div>
<svg class="a" style="left:1120px;top:749px" width="12" height="10"><use href="#cx"/></svg>
<div class="a" style="left:196px;top:750px;width:150px;height:22px;border-radius:0 11px 11px 0;background:linear-gradient(rgba(255,255,255,.35),rgba(255,255,255,.12));box-shadow:0 0 0 1px rgba(40,90,85,.6),inset 0 0 0 1px rgba(255,255,255,.35)"></div>
<svg class="a" style="left:210px;top:753px" width="150" height="18"><rect x="1" y="1" width="14" height="14" rx="1" fill="#3a54c8" stroke="#1a2a80"/><rect x="4" y="1.500" width="8" height="5" fill="#eef"/><rect x="4" y="9" width="8" height="6" fill="#223"/><rect x="9" y="10" width="2" height="4" fill="#eef"/><path d="M33 4 a5 5 0 1 1 -3 9" fill="none" stroke="#2a5ad0" stroke-width="2.6"/><path d="M24 3 L32 2 L30 9 Z" fill="#2a5ad0"/><path d="M41 7h6l-3 3.500Z" fill="#4a6a8a"/><path d="M57 4 a5 5 0 1 0 3 9" fill="none" stroke="#8ab0c8" stroke-width="2.4" opacity=".7"/><path d="M66 3 L58 2 L60 9 Z" fill="#8ab0c8" opacity=".7"/><path d="M73 7h6l-3 3.500Z" fill="#7aa0a8"/><rect x="88" y="1" width="11" height="14" fill="#fff" stroke="#667"/><circle cx="97" cy="9" r="4" fill="#cfe6ff" stroke="#555" stroke-width="1.3"/><path d="M100 12l3 4" stroke="#c80" stroke-width="2.2"/><rect x="110" y="6" width="16" height="8" rx="1" fill="#d8d8d8" stroke="#555"/><rect x="113" y="1" width="10" height="6" fill="#fff" stroke="#666"/><rect x="113" y="11" width="10" height="5" fill="#fff" stroke="#666"/><circle cx="123" cy="3.500" r="3" fill="#3a3"/><path d="M142 6h7M142 9h7l-3.500 4Z" fill="#2a4a9a" stroke="#2a4a9a" stroke-width="1"/></svg>
<div class="a " style="left:159px;top:774px;width:991px;height:272px;background:#bfdbff"></div>
<div class="a" style="left:218px;top:779px;font:12px 'Liberation Sans','Noto Sans CJK SC',sans-serif;line-height:18px;color:#2257a8;white-space:pre;letter-spacing:0">开始</div>
<div class="a" style="left:271px;top:779px;font:12px 'Liberation Sans','Noto Sans CJK SC',sans-serif;line-height:18px;color:#2257a8;white-space:pre;letter-spacing:0">插入</div>
<div class="a" style="left:324px;top:779px;font:12px 'Liberation Sans','Noto Sans CJK SC',sans-serif;line-height:18px;color:#2257a8;white-space:pre;letter-spacing:0">页面布局</div>
<div class="a" style="left:401px;top:779px;font:12px 'Liberation Sans','Noto Sans CJK SC',sans-serif;line-height:18px;color:#2257a8;white-space:pre;letter-spacing:0">公式</div>
<div class="a" style="left:454px;top:779px;font:12px 'Liberation Sans','Noto Sans CJK SC',sans-serif;line-height:18px;color:#2257a8;white-space:pre;letter-spacing:0">数据</div>
<div class="a" style="left:507px;top:779px;font:12px 'Liberation Sans','Noto Sans CJK SC',sans-serif;line-height:18px;color:#2257a8;white-space:pre;letter-spacing:0">审阅</div>
<div class="a" style="left:560px;top:779px;font:12px 'Liberation Sans','Noto Sans CJK SC',sans-serif;line-height:18px;color:#2257a8;white-space:pre;letter-spacing:0">视图</div>
<div class="a" style="left:613px;top:779px;font:12px 'Liberation Sans','Noto Sans CJK SC',sans-serif;line-height:18px;color:#2257a8;white-space:pre;letter-spacing:.55px">Acrobat</div>
<div class="a" style="left:1065px;top:780px;width:14px;height:14px;border-radius:50%;background:radial-gradient(circle at 40% 30%,#8ab8ff,#1a50c8 70%);box-shadow:0 0 0 1px #9ab8e8;color:#fff;font:bold 11px 'Liberation Sans',sans-serif;line-height:14px;text-align:center">?</div>
<div class="a" style="left:1090px;top:789px;width:7px;height:2px;background:#7a8a9a"></div>
<div class="a" style="left:1113px;top:782px;width:7px;height:6px;border:1px solid #6a7a8a;border-top:2px solid #6a7a8a"></div><div class="a" style="left:1111px;top:784px;width:7px;height:6px;border:1px solid #6a7a8a;border-top:2px solid #6a7a8a;background:#bfdbff"></div>
<svg class="a" style="left:1134px;top:783px" width="9" height="8"><path d="M1 1L8 7M8 1L1 7" stroke="#6a7a8a" stroke-width="2"/></svg>
<div class="a" style="left:162px;top:752px;width:36px;height:36px;border-radius:50%;background:radial-gradient(circle at 50% 25%,#fff 0,#eef2f4 40%,#c8d0d4 75%,#f4f6f8 100%);box-shadow:0 0 0 1px #8a9aa0,0 1px 3px rgba(0,0,0,.5)"></div>
<svg class="a" style="left:169px;top:759px" width="22" height="22" fill="none" stroke-width="2.6"><rect x="2" y="2" width="8" height="8" rx="2" stroke="#e8501c"/><rect x="12" y="3" width="7" height="7" rx="2" stroke="#3a8ad8"/><rect x="3" y="12" width="7" height="7" rx="2" stroke="#e8b81c"/><rect x="12" y="12" width="8" height="8" rx="2" stroke="#4aa83a"/></svg>
<div class="a " style="left:159px;top:801px;width:991px;height:1px;background:#8db2e3"></div>
<div class="a " style="left:159px;top:803px;width:991px;height:19px;background:#fff"></div>
<div class="a " style="left:318px;top:803px;width:76px;height:19px;background:linear-gradient(#e6f0fc,#c6daf4)"></div>
<div class="a " style="left:159px;top:822px;width:991px;height:1px;background:#8db2e3"></div>
<div class="a " style="left:159px;top:823px;width:991px;height:4px;background:#d9e7f7"></div>
<div class="a" style="left:216px;top:804px;font:13px 'Liberation Sans',sans-serif;line-height:18px">C20</div>
<svg class="a" style="left:304px;top:810px" width="8" height="5"><path d="M0 0H8L4 5Z" fill="#000"/></svg>
<div class="a" style="left:320px;top:805px;width:72px;height:16px;border-radius:8px 0 0 8px;background:linear-gradient(#f4f8fc,#d0e0f0);box-shadow:inset 0 0 0 1px #a8bcd8"></div>
<div class="a" style="left:323px;top:808px;width:7px;height:7px;border-radius:50%;background:radial-gradient(#fff,#99a)"></div>
<div class="a" style="left:376px;top:803px;font:italic bold 13px 'Liberation Serif',serif;line-height:18px;color:#445">f<span style="font-size:9px">x</span></div>
<div class="a" style="left:406px;top:803px;font:15px 'Liberation Serif','Noto Serif CJK SC',serif;line-height:19px;white-space:pre;letter-spacing:.07px" id="fx">满足厚径比的情况下，过孔可不做补偿或少补偿，尽量使用相对小的钻刀，如<span style="font-family:'Liberation Mono',monospace;font-size:13.75px;letter-spacing:-0.75px;line-height:0">8mil</span>的孔可使用<span style="font-family:'Liberation Mono',monospace;font-size:13.75px;letter-spacing:-0.75px;line-height:0">0.25mm</span>的钻</div>
<div class="a " style="left:1119px;top:803px;width:31px;height:19px;background:linear-gradient(#dce8f8,#b8cff0)"></div>
<svg class="a" style="left:1121px;top:805px" width="28" height="16"><path d="M2 6L6 1L10 6ZM2 9L6 14L10 9Z" fill="#5a7ab0"/><rect x="13.5" y=".5" width="13" height="15" rx="2" fill="#e8f0fc" stroke="#8aa8d8"/><path d="M17 4l3 3 3-3M17 8l3 3 3-3" stroke="#223" stroke-width="1.6" fill="none"/></svg>
<div class="a " style="left:159px;top:827px;width:34px;height:18px;background:linear-gradient(#c8dcf6,#aac6ee);border-right:1px solid #9eb6ce;border-bottom:1px solid #9eb6ce"></div>
<svg class="a" style="left:177px;top:831px" width="12" height="12"><path d="M11 0V11H0Z" fill="#e6eefa"/></svg>
<div class="a " style="left:193px;top:827px;width:57px;height:18px;background:linear-gradient(#f6f9fd,#dde6f2);border-right:1px solid #9eb6ce;border-bottom:1px solid #9eb6ce;font:15px 'Liberation Serif',serif;line-height:18px;text-align:center;color:#222">A</div>
<div class="a " style="left:250px;top:827px;width:55px;height:18px;background:linear-gradient(#f6f9fd,#dde6f2);border-right:1px solid #9eb6ce;border-bottom:1px solid #9eb6ce;font:15px 'Liberation Serif',serif;line-height:18px;text-align:center;color:#222">B</div>
<div class="a " style="left:305px;top:827px;width:166px;height:18px;background:linear-gradient(#f9d9a0,#f5c779 40%,#f2b55a);border-right:1px solid #e8a74e;border-bottom:1px solid #e8a74e;font:15px 'Liberation Serif',serif;line-height:18px;text-align:center;color:#222">C</div>
<div class="a " style="left:471px;top:827px;width:31px;height:18px;background:linear-gradient(#f9d9a0,#f5c779 40%,#f2b55a);border-right:1px solid #e8a74e;border-bottom:1px solid #e8a74e;font:15px 'Liberation Serif',serif;line-height:18px;text-align:center;color:#222">D</div>
<div class="a " style="left:502px;top:827px;width:81px;height:18px;background:linear-gradient(#f9d9a0,#f5c779 40%,#f2b55a);border-right:1px solid #e8a74e;border-bottom:1px solid #e8a74e;font:15px 'Liberation Serif',serif;line-height:18px;text-align:center;color:#222">E</div>
<div class="a " style="left:583px;top:827px;width:55px;height:18px;background:linear-gradient(#f9d9a0,#f5c779 40%,#f2b55a);border-right:1px solid #e8a74e;border-bottom:1px solid #e8a74e;font:15px 'Liberation Serif',serif;line-height:18px;text-align:center;color:#222">F</div>
<div class="a " style="left:638px;top:827px;width:48px;height:18px;background:linear-gradient(#f9d9a0,#f5c779 40%,#f2b55a);border-right:1px solid #e8a74e;border-bottom:1px solid #e8a74e;font:15px 'Liberation Serif',serif;line-height:18px;text-align:center;color:#222">G</div>
<div class="a " style="left:686px;top:827px;width:89px;height:18px;background:linear-gradient(#f9d9a0,#f5c779 40%,#f2b55a);border-right:1px solid #e8a74e;border-bottom:1px solid #e8a74e;font:15px 'Liberation Serif',serif;line-height:18px;text-align:center;color:#222">H</div>
<div class="a " style="left:775px;top:827px;width:139px;height:18px;background:linear-gradient(#f9d9a0,#f5c779 40%,#f2b55a);border-right:1px solid #e8a74e;border-bottom:1px solid #e8a74e;font:15px 'Liberation Serif',serif;line-height:18px;text-align:center;color:#222">I</div>
<div class="a " style="left:914px;top:827px;width:88px;height:18px;background:linear-gradient(#f6f9fd,#dde6f2);border-right:1px solid #9eb6ce;border-bottom:1px solid #9eb6ce;font:15px 'Liberation Serif',serif;line-height:18px;text-align:center;color:#222">J</div>
<div class="a " style="left:1002px;top:827px;width:72px;height:18px;background:linear-gradient(#f6f9fd,#dde6f2);border-right:1px solid #9eb6ce;border-bottom:1px solid #9eb6ce;font:15px 'Liberation Serif',serif;line-height:18px;text-align:center;color:#222">K</div>
<div class="a " style="left:1074px;top:827px;width:60px;height:18px;background:linear-gradient(#f6f9fd,#dde6f2);border-right:1px solid #9eb6ce;border-bottom:1px solid #9eb6ce;font:15px 'Liberation Serif',serif;line-height:18px;text-align:center;color:#222">L</div>
<div class="a " style="left:159px;top:845px;width:975px;height:200px;background:#fff"></div>
<div class="a " style="left:159px;top:845px;width:34px;height:43px;background:#e4ecf7;border-right:1px solid #9eb6ce;border-bottom:1px solid #9eb6ce;font:13.5px 'Liberation Sans',sans-serif;text-align:center;line-height:72px;color:#333;overflow:hidden">9</div>
<div class="a " style="left:1002px;top:887px;width:132px;height:1px;background:#d0d7e5"></div>
<div class="a " style="left:159px;top:888px;width:34px;height:44px;background:#e4ecf7;border-right:1px solid #9eb6ce;border-bottom:1px solid #9eb6ce;font:13.5px 'Liberation Sans',sans-serif;text-align:center;line-height:74px;color:#333;overflow:hidden">10</div>
<div class="a " style="left:1002px;top:931px;width:132px;height:1px;background:#d0d7e5"></div>
<div class="a " style="left:159px;top:932px;width:34px;height:44px;background:#e4ecf7;border-right:1px solid #9eb6ce;border-bottom:1px solid #9eb6ce;font:13.5px 'Liberation Sans',sans-serif;text-align:center;line-height:74px;color:#333;overflow:hidden">11</div>
<div class="a " style="left:1002px;top:975px;width:132px;height:1px;background:#d0d7e5"></div>
<div class="a " style="left:159px;top:976px;width:34px;height:64px;background:#e4ecf7;border-right:1px solid #9eb6ce;border-bottom:1px solid #9eb6ce;font:13.5px 'Liberation Sans',sans-serif;text-align:center;line-height:114px;color:#333;overflow:hidden">12</div>
<div class="a " style="left:1002px;top:1039px;width:132px;height:1px;background:#d0d7e5"></div>
<div class="a " style="left:159px;top:1040px;width:975px;height:1px;background:#9eb6ce"></div>
<div class="a " style="left:1074px;top:845px;width:1px;height:200px;background:#d0d7e5"></div>
<div class="a " style="left:1133px;top:845px;width:1px;height:200px;background:#d0d7e5"></div>
<div class="a " style="left:250px;top:845px;width:1.3px;height:200px;background:#000"></div>
<div class="a " style="left:305px;top:845px;width:1.3px;height:200px;background:#000"></div>
<div class="a " style="left:914px;top:845px;width:1.3px;height:200px;background:#000"></div>
<div class="a " style="left:1002px;top:845px;width:1.3px;height:200px;background:#000"></div>
<div class="a " style="left:250px;top:887.7px;width:753px;height:1.3px;background:#000"></div>
<div class="a " style="left:250px;top:931.7px;width:753px;height:1.3px;background:#000"></div>
<div class="a " style="left:250px;top:975.7px;width:753px;height:1.3px;background:#000"></div>
<div class="a " style="left:250px;top:1039.7px;width:753px;height:1.3px;background:#000"></div>
<div class="a" style="left:250px;top:856px;width:55px;text-align:center;font:bold 16px 'Liberation Serif',serif;line-height:20px;color:#d00000">2</div>
<div class="a" style="left:250px;top:900px;width:55px;text-align:center;font:bold 16px 'Liberation Serif',serif;line-height:20px;color:#d00000">3</div>
<div class="a" style="left:250px;top:944px;width:55px;text-align:center;font:bold 16px 'Liberation Serif',serif;line-height:20px;color:#d00000">4</div>
<div class="a" style="left:250px;top:998px;width:55px;text-align:center;font:bold 16px 'Liberation Serif',serif;line-height:20px;color:#d00000">5</div>
<div class="a" style="left:309px;top:858px;font:13.25px 'Liberation Serif','Noto Serif CJK SC',serif;line-height:15.5px;color:#c00000;white-space:pre;letter-spacing:.05px">符合<span style="font-family:'Liberation Mono',monospace;font-size:12.15px;letter-spacing:-0.665px;line-height:0">RoHS</span>。</div>
<div class="a" style="left:309px;top:902px;font:13.25px 'Liberation Serif','Noto Serif CJK SC',serif;line-height:15.5px;color:#c00000;white-space:pre;letter-spacing:.05px">孔铜最小<span style="font-family:'Liberation Mono',monospace;font-size:12.15px;letter-spacing:-0.665px;line-height:0">0.7mil</span>。</div>
<div class="a" style="left:309px;top:946px;font:13.25px 'Liberation Serif','Noto Serif CJK SC',serif;line-height:15.5px;color:#c00000;white-space:pre;letter-spacing:.05px">孔位公差：<span style="font-family:'Liberation Mono',monospace;font-size:12.15px;letter-spacing:-0.665px;line-height:0">+/-3mil</span>。</div>
<div class="a" style="left:309px;top:992px;font:13.25px 'Liberation Serif','Noto Serif CJK SC',serif;line-height:15.5px;color:#c00000;white-space:pre;letter-spacing:.05px" id="r12">焊环：内层最小<span style="font-family:'Liberation Mono',monospace;font-size:12.15px;letter-spacing:-0.665px;line-height:0">2mil</span>，外层：<span style="font-family:'Liberation Mono',monospace;font-size:12.15px;letter-spacing:-0.665px;line-height:0">&lt;=15mil</span>的孔，焊环最小<span style="font-family:'Liberation Mono',monospace;font-size:12.15px;letter-spacing:-0.665px;line-height:0">2mil</span>，大于<span style="font-family:'Liberation Mono',monospace;font-size:12.15px;letter-spacing:-0.665px;line-height:0">15mil</span>的孔，焊环最小<span style="font-family:'Liberation Mono',monospace;font-size:12.15px;letter-spacing:-0.665px;line-height:0">5mil</span>，间距不满<br>足处削后可按<span style="font-family:'Liberation Mono',monospace;font-size:12.15px;letter-spacing:-0.665px;line-height:0">IPC 2</span>级。</div>
<div class="a " style="left:654px;top:978px;width:199px;height:42px;border:3px solid #e81ce8;box-shadow:1px 2px 3px rgba(0,0,0,.45)"></div>
<div class="a " style="left:1134px;top:826px;width:15px;height:220px;background:linear-gradient(90deg,#8fa9d4,#b4c8ea 40%,#9db5dd)"></div>
<div class="a " style="left:1135px;top:827px;width:13px;height:6px;background:#f0f4fa;border:1px solid #8aa0c0"></div>
<svg class="a" style="left:1137px;top:838px" width="9" height="6"><path d="M0 6H9L4.500 0Z" fill="#4a5a7a"/></svg>
<div class="a " style="left:1135px;top:911px;width:13px;height:140px;background:linear-gradient(90deg,#f4f8fd,#dce6f4 50%,#c8d6ec);border:1px solid #8aa0c0;border-radius:2px"></div>
<div class="a " style="left:0px;top:1040px;width:1920px;height:4px;background:linear-gradient(#1c1e20,#3a3d40)"></div>
<div class="a " style="left:58.0px;top:1040px;width:88px;height:4px;background:linear-gradient(#e0e2e4,#a8acb0);border-radius:3px 3px 0 0;box-shadow:0 0 0 1px #555"></div>
<div class="a " style="left:149.4px;top:1040px;width:88px;height:4px;background:linear-gradient(#e0e2e4,#a8acb0);border-radius:3px 3px 0 0;box-shadow:0 0 0 1px #555"></div>
<div class="a " style="left:240.9px;top:1040px;width:88px;height:4px;background:linear-gradient(#e0e2e4,#a8acb0);border-radius:3px 3px 0 0;box-shadow:0 0 0 1px #555"></div>
<div class="a " style="left:332.4px;top:1040px;width:88px;height:4px;background:linear-gradient(#e0e2e4,#a8acb0);border-radius:3px 3px 0 0;box-shadow:0 0 0 1px #555"></div>
<div class="a " style="left:423.8px;top:1040px;width:88px;height:4px;background:linear-gradient(#e0e2e4,#a8acb0);border-radius:3px 3px 0 0;box-shadow:0 0 0 1px #555"></div>
<div class="a " style="left:515.2px;top:1040px;width:88px;height:4px;background:linear-gradient(#e0e2e4,#a8acb0);border-radius:3px 3px 0 0;box-shadow:0 0 0 1px #555"></div>
<div class="a " style="left:606.7px;top:1040px;width:88px;height:4px;background:linear-gradient(#e0e2e4,#a8acb0);border-radius:3px 3px 0 0;box-shadow:0 0 0 1px #555"></div>
<div class="a " style="left:698.1px;top:1040px;width:88px;height:4px;background:linear-gradient(#e0e2e4,#a8acb0);border-radius:3px 3px 0 0;box-shadow:0 0 0 1px #555"></div>
<div class="a " style="left:789.6px;top:1040px;width:88px;height:4px;background:linear-gradient(#e0e2e4,#a8acb0);border-radius:3px 3px 0 0;box-shadow:0 0 0 1px #555"></div>
<div class="a " style="left:881.1px;top:1040px;width:88px;height:4px;background:linear-gradient(#e0e2e4,#a8acb0);border-radius:3px 3px 0 0;box-shadow:0 0 0 1px #555"></div>
<div class="a " style="left:972.5px;top:1040px;width:88px;height:4px;background:linear-gradient(#e0e2e4,#a8acb0);border-radius:3px 3px 0 0;box-shadow:0 0 0 1px #555"></div>
<div class="a " style="left:1064.0px;top:1040px;width:88px;height:4px;background:linear-gradient(#e0e2e4,#a8acb0);border-radius:3px 3px 0 0;box-shadow:0 0 0 1px #555"></div>
<div class="a " style="left:1155.4px;top:1040px;width:88px;height:4px;background:linear-gradient(#e0e2e4,#a8acb0);border-radius:3px 3px 0 0;box-shadow:0 0 0 1px #555"></div>
<div class="a " style="left:1246.9px;top:1040px;width:88px;height:4px;background:linear-gradient(#e0e2e4,#a8acb0);border-radius:3px 3px 0 0;box-shadow:0 0 0 1px #555"></div>
<div class="a " style="left:1338.3px;top:1040px;width:88px;height:4px;background:linear-gradient(#e0e2e4,#a8acb0);border-radius:3px 3px 0 0;box-shadow:0 0 0 1px #555"></div>
<div class="a " style="left:1429.8px;top:1040px;width:88px;height:4px;background:linear-gradient(#e0e2e4,#a8acb0);border-radius:3px 3px 0 0;box-shadow:0 0 0 1px #555"></div>
<div class="a " style="left:1521.2px;top:1040px;width:88px;height:4px;background:linear-gradient(#e0e2e4,#a8acb0);border-radius:3px 3px 0 0;box-shadow:0 0 0 1px #555"></div>
<div class="a " style="left:1822px;top:1040px;width:98px;height:4px;background:linear-gradient(#8a8e92,#5a5e62)"></div>
<div class="a " style="left:1738px;top:1018px;width:182px;height:22px;background:#fff"></div>
<div class="a" style="left:1717px;top:1016px;width:23px;height:23px;background:#f26522;border-radius:3px;transform:rotate(-14deg);color:#fff;font:bold 22px 'Liberation Sans',sans-serif;line-height:23px;text-align:center;box-shadow:0 1px 2px rgba(0,0,0,.3)">S</div>
<div class="a" style="left:1747px;top:1018px;font:bold 16px 'Liberation Sans','Noto Sans CJK SC',sans-serif;line-height:21px;color:#1e6bc8">中</div>
<div class="a" style="left:1770px;top:1016px;font:bold 15px 'Liberation Sans',sans-serif;line-height:21px;color:#1e6bc8;letter-spacing:-1px">°,</div>
<svg class="a" style="left:1790px;top:1020px" width="130" height="18" fill="none" stroke="#1e6bc8" stroke-width="1.6"><circle cx="9" cy="8.500" r="7"/><circle cx="6.500" cy="6.500" r=".7" fill="#1e6bc8"/><circle cx="11.500" cy="6.500" r=".7" fill="#1e6bc8"/><path d="M5.500 10.500q3.500 3.500 7 0"/><rect x="28.500" y="1" width="5" height="10" rx="2.500" fill="#1e6bc8"/><path d="M26 8q0 5.500 5 5.500t5-5.500M31 13.500v3M28 16.500h6"/><rect x="45.500" y="3.500" width="15" height="10" rx="1.500" fill="#1e6bc8"/><path d="M48 6.500h10M48 9h10" stroke="#fff" stroke-width="1.200" stroke-dasharray="1.500 1.500"/><path d="M49.500 11.500h7" stroke="#fff" stroke-width="1.200"/><circle cx="76" cy="5" r="3.200" fill="#b8bcc4" stroke="none"/><path d="M70 15q0-6 6-6t6 6Z" fill="#b8bcc4" stroke="none"/><path d="M92 4l4-2.500q2.500 2 5 0l4 2.500-2 3.500-1.500-1v9h-6v-9l-1.500 1Z" fill="#1e6bc8" stroke="none"/><rect x="112" y="2" width="5.500" height="5.500" fill="#1e6bc8" stroke="none"/><rect x="119.500" y="2.500" width="4.500" height="4.500" stroke-width="1.300"/><rect x="112" y="9.500" width="5.500" height="5.500" fill="#1e6bc8" stroke="none"/><rect x="119" y="9.500" width="5.500" height="5.500" fill="#1e6bc8" stroke="none"/></svg>
<div class="a" style="left:1901px;top:984px;width:38px;height:38px;border-radius:50%;background:radial-gradient(circle at 45% 30%,#9ae89a,#3db84a 60%,#2a9a3a);box-shadow:0 0 0 2px #e8f8e8,0 0 3px rgba(0,0,0,.4);color:#fff;font:italic bold 11px 'Liberation Sans',sans-serif;line-height:42px;padding-left:5px">77</div>

</body></html>
